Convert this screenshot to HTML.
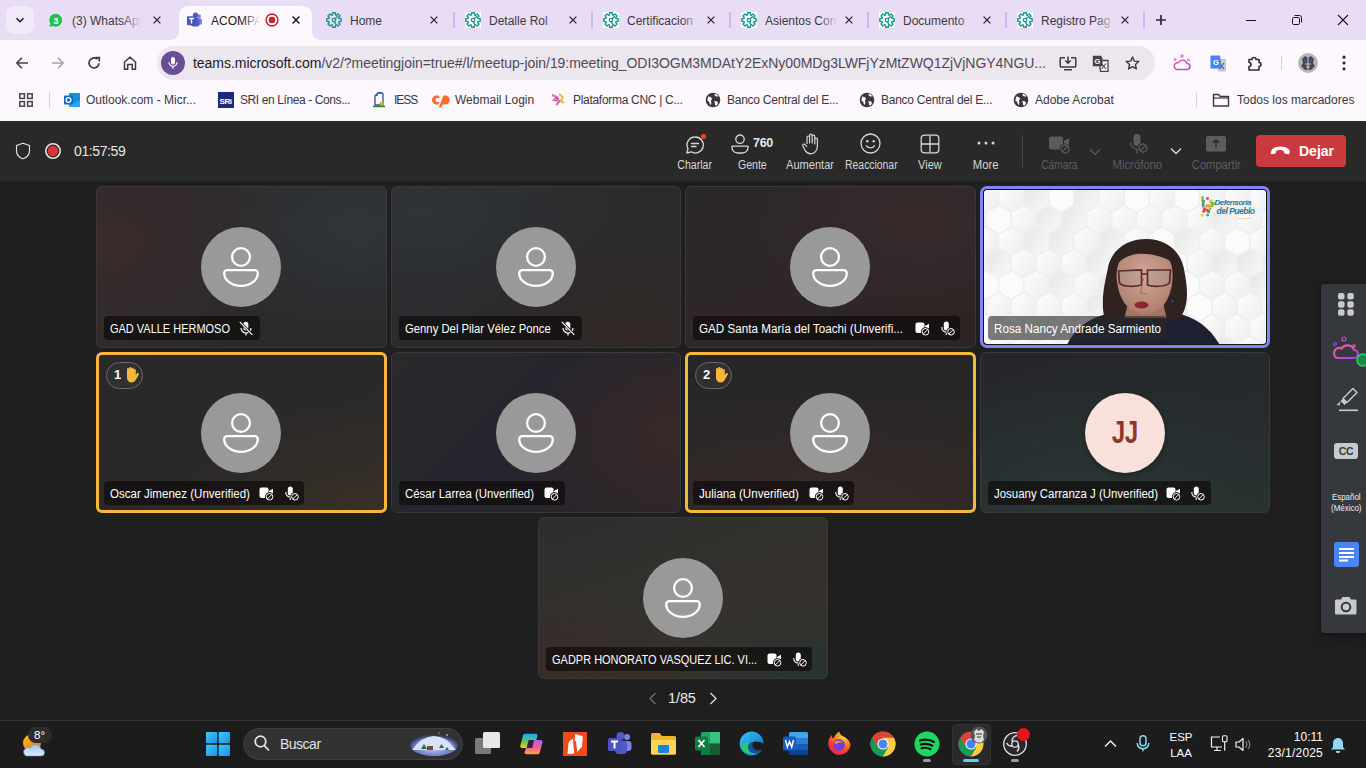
<!DOCTYPE html>
<html><head><meta charset="utf-8">
<style>
*{box-sizing:border-box;margin:0;padding:0}
html,body{width:1366px;height:768px;overflow:hidden;background:#1f1f1f;font-family:"Liberation Sans",sans-serif}
.a{position:absolute}
svg{display:block}
/* chrome */
#tabstrip{left:0;top:0;width:1366px;height:40px;background:#e8ddf4}
#toolbar{left:0;top:40px;width:1366px;height:81px;background:#fdf7fe}
.tabt{font-size:12px;color:#3c3940;white-space:nowrap;overflow:hidden;top:14px;line-height:14px}
.sep{width:1px;background:#c9b9e0}
#omni{left:157px;top:46px;width:998px;height:34px;border-radius:17px;background:#ece6ef}
.bm{font-size:12px;color:#3b3742;top:93px;line-height:14px;white-space:nowrap}
/* teams */
#thead{left:0;top:121px;width:1366px;height:60px;background:#292929}
.tb{color:#d6d6d6;font-size:12px;text-align:center;white-space:nowrap}
.tile{border-radius:6px;border:1px solid #3a3838;overflow:hidden}
.av{width:80px;height:80px;border-radius:50%;background:#999;box-shadow:0 2px 6px rgba(0,0,0,.35)}
.lbl{height:24px;border-radius:4px;background:rgba(10,8,8,.72);color:#fff;font-size:12.5px;line-height:26px;padding-left:6px;white-space:nowrap}
#taskbar{left:0;top:720px;width:1366px;height:48px;background:#1c1c1c;border-top:1px solid #333}
</style></head><body>
<div id="toolbar" class="a"></div>
<!-- TAB STRIP -->
<div id="tabstrip" class="a"></div>
<div class="a" style="left:6px;top:6px;width:28px;height:28px;border-radius:8px;background:#f2e9f9"></div>
<svg class="a" style="left:14px;top:14px" width="12" height="12" viewBox="0 0 12 12"><path d="M2.5 4.2 L6 7.7 L9.5 4.2" fill="none" stroke="#1f1b24" stroke-width="1.6"/></svg>
<!-- tab1 whatsapp -->
<svg class="a" style="left:47px;top:12px" width="17" height="17" viewBox="0 0 17 17"><path d="M8.8 1.2a7 7 0 0 0-6 10.6L1.6 15.6l3.9-1.1A7 7 0 1 0 8.8 1.2z" fill="#1fbf55" stroke="#fff" stroke-width=".7"/><text x="8.8" y="11.8" font-size="9.5" font-weight="bold" fill="#fff" text-anchor="middle" font-family="Liberation Sans">3</text></svg>
<div class="a tabt" style="left:72px;width:70px">(3) WhatsApp</div>
<div class="a" style="left:122px;top:10px;width:22px;height:20px;background:linear-gradient(90deg,rgba(232,221,244,0),#e8ddf4 90%)"></div>
<svg class="a x8" style="left:153px;top:16px" width="8" height="8" viewBox="0 0 8 8"><path d="M.6.6l6.8 6.8M7.4.6L.6 7.4" stroke="#2b2731" stroke-width="1.3"/></svg>
<!-- active tab -->
<div class="a" style="left:179px;top:6px;width:133px;height:36px;background:#fdf7fe;border-radius:9px 9px 0 0"></div>
<div class="a" style="left:171px;top:32px;width:8px;height:8px;background:radial-gradient(circle at 0 0,#e8ddf4 7.5px,#fdf7fe 8px)"></div>
<div class="a" style="left:312px;top:32px;width:8px;height:8px;background:radial-gradient(circle at 100% 0,#e8ddf4 7.5px,#fdf7fe 8px)"></div>
<svg class="a" style="left:186px;top:12px" width="17" height="16" viewBox="0 0 17 16"><circle cx="13" cy="4.3" r="2" fill="#7b83eb"/><circle cx="9.5" cy="3.2" r="2.6" fill="#5059c9"/><rect x="9" y="6.3" width="7" height="6.5" rx="2" fill="#7b83eb"/><rect x="5" y="6" width="8.5" height="8.5" rx="2.5" fill="#5059c9"/><rect x="1" y="4.3" width="9" height="9" rx="1" fill="#4b53bc"/><path d="M3 6.5h5M5.5 6.5v5" stroke="#fff" stroke-width="1.4"/></svg>
<div class="a tabt" style="left:211px;width:48px;color:#1e1b22">ACOMPA</div>
<div class="a" style="left:243px;top:10px;width:18px;height:20px;background:linear-gradient(90deg,rgba(253,247,254,0),#fdf7fe 95%)"></div>
<svg class="a" style="left:264px;top:12px" width="16" height="16" viewBox="0 0 16 16"><circle cx="8" cy="8" r="5.9" fill="none" stroke="#c8232b" stroke-width="1.5"/><circle cx="8" cy="8" r="3.3" fill="#c8232b"/></svg>
<svg class="a" style="left:292px;top:16px" width="8" height="8" viewBox="0 0 8 8"><path d="M.6.6l6.8 6.8M7.4.6L.6 7.4" stroke="#1b181f" stroke-width="1.4"/></svg>

<svg class="a" style="left:326px;top:12px" width="16" height="16" viewBox="0 0 16 16"><path d="M5.97 3.10 L6.45 2.93 L6.61 0.83 L9.39 0.83 L9.55 2.93 L10.03 3.10 L10.49 3.32 L12.08 1.95 L14.05 3.92 L12.68 5.51 L12.90 5.97 L13.07 6.45 L15.17 6.61 L15.17 9.39 L13.07 9.55 L12.90 10.03 L12.68 10.49 L14.05 12.08 L12.08 14.05 L10.49 12.68 L10.03 12.90 L9.55 13.07 L9.39 15.17 L6.61 15.17 L6.45 13.07 L5.97 12.90 L5.51 12.68 L3.92 14.05 L1.95 12.08 L3.32 10.49 L3.10 10.03 L2.93 9.55 L0.83 9.39 L0.83 6.61 L2.93 6.45 L3.10 5.97 L3.32 5.51 L1.95 3.92 L3.92 1.95 L5.51 3.32Z" fill="none" stroke="#169a8e" stroke-width="1.45" stroke-linejoin="round"/><circle cx="8" cy="8" r="1.7" fill="none" stroke="#169a8e" stroke-width="1.3"/><path d="M9.2 6.8L11.8 4.2M8.3 9.7l1.8 3" stroke="#169a8e" stroke-width="1.3"/></svg>
<div class="a tabt" style="left:350px;width:72px">Home</div>
<div class="a" style="left:404px;top:10px;width:22px;height:20px;background:linear-gradient(90deg,rgba(232,221,244,0),#e8ddf4 90%)"></div>
<svg class="a" style="left:430px;top:16px" width="8" height="8" viewBox="0 0 8 8"><path d="M.6.6l6.8 6.8M7.4.6L.6 7.4" stroke="#2b2731" stroke-width="1.3"/></svg>
<svg class="a" style="left:465px;top:12px" width="16" height="16" viewBox="0 0 16 16"><rect width="16" height="16" fill="#fff"/><path d="M5.97 3.10 L6.45 2.93 L6.61 0.83 L9.39 0.83 L9.55 2.93 L10.03 3.10 L10.49 3.32 L12.08 1.95 L14.05 3.92 L12.68 5.51 L12.90 5.97 L13.07 6.45 L15.17 6.61 L15.17 9.39 L13.07 9.55 L12.90 10.03 L12.68 10.49 L14.05 12.08 L12.08 14.05 L10.49 12.68 L10.03 12.90 L9.55 13.07 L9.39 15.17 L6.61 15.17 L6.45 13.07 L5.97 12.90 L5.51 12.68 L3.92 14.05 L1.95 12.08 L3.32 10.49 L3.10 10.03 L2.93 9.55 L0.83 9.39 L0.83 6.61 L2.93 6.45 L3.10 5.97 L3.32 5.51 L1.95 3.92 L3.92 1.95 L5.51 3.32Z" fill="none" stroke="#169a8e" stroke-width="1.45" stroke-linejoin="round"/><circle cx="8" cy="8" r="1.7" fill="none" stroke="#169a8e" stroke-width="1.3"/><path d="M9.2 6.8L11.8 4.2M8.3 9.7l1.8 3" stroke="#169a8e" stroke-width="1.3"/></svg>
<div class="a tabt" style="left:489px;width:72px">Detalle Rol</div>
<div class="a" style="left:543px;top:10px;width:22px;height:20px;background:linear-gradient(90deg,rgba(232,221,244,0),#e8ddf4 90%)"></div>
<svg class="a" style="left:569px;top:16px" width="8" height="8" viewBox="0 0 8 8"><path d="M.6.6l6.8 6.8M7.4.6L.6 7.4" stroke="#2b2731" stroke-width="1.3"/></svg>
<svg class="a" style="left:603px;top:12px" width="16" height="16" viewBox="0 0 16 16"><rect width="16" height="16" fill="#fff"/><path d="M5.97 3.10 L6.45 2.93 L6.61 0.83 L9.39 0.83 L9.55 2.93 L10.03 3.10 L10.49 3.32 L12.08 1.95 L14.05 3.92 L12.68 5.51 L12.90 5.97 L13.07 6.45 L15.17 6.61 L15.17 9.39 L13.07 9.55 L12.90 10.03 L12.68 10.49 L14.05 12.08 L12.08 14.05 L10.49 12.68 L10.03 12.90 L9.55 13.07 L9.39 15.17 L6.61 15.17 L6.45 13.07 L5.97 12.90 L5.51 12.68 L3.92 14.05 L1.95 12.08 L3.32 10.49 L3.10 10.03 L2.93 9.55 L0.83 9.39 L0.83 6.61 L2.93 6.45 L3.10 5.97 L3.32 5.51 L1.95 3.92 L3.92 1.95 L5.51 3.32Z" fill="none" stroke="#169a8e" stroke-width="1.45" stroke-linejoin="round"/><circle cx="8" cy="8" r="1.7" fill="none" stroke="#169a8e" stroke-width="1.3"/><path d="M9.2 6.8L11.8 4.2M8.3 9.7l1.8 3" stroke="#169a8e" stroke-width="1.3"/></svg>
<div class="a tabt" style="left:627px;width:72px">Certificacion</div>
<div class="a" style="left:681px;top:10px;width:22px;height:20px;background:linear-gradient(90deg,rgba(232,221,244,0),#e8ddf4 90%)"></div>
<svg class="a" style="left:707px;top:16px" width="8" height="8" viewBox="0 0 8 8"><path d="M.6.6l6.8 6.8M7.4.6L.6 7.4" stroke="#2b2731" stroke-width="1.3"/></svg>
<svg class="a" style="left:741px;top:12px" width="16" height="16" viewBox="0 0 16 16"><rect width="16" height="16" fill="#fff"/><path d="M5.97 3.10 L6.45 2.93 L6.61 0.83 L9.39 0.83 L9.55 2.93 L10.03 3.10 L10.49 3.32 L12.08 1.95 L14.05 3.92 L12.68 5.51 L12.90 5.97 L13.07 6.45 L15.17 6.61 L15.17 9.39 L13.07 9.55 L12.90 10.03 L12.68 10.49 L14.05 12.08 L12.08 14.05 L10.49 12.68 L10.03 12.90 L9.55 13.07 L9.39 15.17 L6.61 15.17 L6.45 13.07 L5.97 12.90 L5.51 12.68 L3.92 14.05 L1.95 12.08 L3.32 10.49 L3.10 10.03 L2.93 9.55 L0.83 9.39 L0.83 6.61 L2.93 6.45 L3.10 5.97 L3.32 5.51 L1.95 3.92 L3.92 1.95 L5.51 3.32Z" fill="none" stroke="#169a8e" stroke-width="1.45" stroke-linejoin="round"/><circle cx="8" cy="8" r="1.7" fill="none" stroke="#169a8e" stroke-width="1.3"/><path d="M9.2 6.8L11.8 4.2M8.3 9.7l1.8 3" stroke="#169a8e" stroke-width="1.3"/></svg>
<div class="a tabt" style="left:765px;width:72px">Asientos Con</div>
<div class="a" style="left:819px;top:10px;width:22px;height:20px;background:linear-gradient(90deg,rgba(232,221,244,0),#e8ddf4 90%)"></div>
<svg class="a" style="left:845px;top:16px" width="8" height="8" viewBox="0 0 8 8"><path d="M.6.6l6.8 6.8M7.4.6L.6 7.4" stroke="#2b2731" stroke-width="1.3"/></svg>
<svg class="a" style="left:879px;top:12px" width="16" height="16" viewBox="0 0 16 16"><rect width="16" height="16" fill="#fff"/><path d="M5.97 3.10 L6.45 2.93 L6.61 0.83 L9.39 0.83 L9.55 2.93 L10.03 3.10 L10.49 3.32 L12.08 1.95 L14.05 3.92 L12.68 5.51 L12.90 5.97 L13.07 6.45 L15.17 6.61 L15.17 9.39 L13.07 9.55 L12.90 10.03 L12.68 10.49 L14.05 12.08 L12.08 14.05 L10.49 12.68 L10.03 12.90 L9.55 13.07 L9.39 15.17 L6.61 15.17 L6.45 13.07 L5.97 12.90 L5.51 12.68 L3.92 14.05 L1.95 12.08 L3.32 10.49 L3.10 10.03 L2.93 9.55 L0.83 9.39 L0.83 6.61 L2.93 6.45 L3.10 5.97 L3.32 5.51 L1.95 3.92 L3.92 1.95 L5.51 3.32Z" fill="none" stroke="#169a8e" stroke-width="1.45" stroke-linejoin="round"/><circle cx="8" cy="8" r="1.7" fill="none" stroke="#169a8e" stroke-width="1.3"/><path d="M9.2 6.8L11.8 4.2M8.3 9.7l1.8 3" stroke="#169a8e" stroke-width="1.3"/></svg>
<div class="a tabt" style="left:903px;width:72px">Documento</div>
<div class="a" style="left:957px;top:10px;width:22px;height:20px;background:linear-gradient(90deg,rgba(232,221,244,0),#e8ddf4 90%)"></div>
<svg class="a" style="left:983px;top:16px" width="8" height="8" viewBox="0 0 8 8"><path d="M.6.6l6.8 6.8M7.4.6L.6 7.4" stroke="#2b2731" stroke-width="1.3"/></svg>
<svg class="a" style="left:1017px;top:12px" width="16" height="16" viewBox="0 0 16 16"><rect width="16" height="16" fill="#fff"/><path d="M5.97 3.10 L6.45 2.93 L6.61 0.83 L9.39 0.83 L9.55 2.93 L10.03 3.10 L10.49 3.32 L12.08 1.95 L14.05 3.92 L12.68 5.51 L12.90 5.97 L13.07 6.45 L15.17 6.61 L15.17 9.39 L13.07 9.55 L12.90 10.03 L12.68 10.49 L14.05 12.08 L12.08 14.05 L10.49 12.68 L10.03 12.90 L9.55 13.07 L9.39 15.17 L6.61 15.17 L6.45 13.07 L5.97 12.90 L5.51 12.68 L3.92 14.05 L1.95 12.08 L3.32 10.49 L3.10 10.03 L2.93 9.55 L0.83 9.39 L0.83 6.61 L2.93 6.45 L3.10 5.97 L3.32 5.51 L1.95 3.92 L3.92 1.95 L5.51 3.32Z" fill="none" stroke="#169a8e" stroke-width="1.45" stroke-linejoin="round"/><circle cx="8" cy="8" r="1.7" fill="none" stroke="#169a8e" stroke-width="1.3"/><path d="M9.2 6.8L11.8 4.2M8.3 9.7l1.8 3" stroke="#169a8e" stroke-width="1.3"/></svg>
<div class="a tabt" style="left:1041px;width:72px">Registro Pag</div>
<div class="a" style="left:1095px;top:10px;width:22px;height:20px;background:linear-gradient(90deg,rgba(232,221,244,0),#e8ddf4 90%)"></div>
<svg class="a" style="left:1121px;top:16px" width="8" height="8" viewBox="0 0 8 8"><path d="M.6.6l6.8 6.8M7.4.6L.6 7.4" stroke="#2b2731" stroke-width="1.3"/></svg>
<div class="a" style="left:453px;top:12px;width:2px;height:16px;background:#cbb9ef"></div>
<div class="a" style="left:591px;top:12px;width:2px;height:16px;background:#cbb9ef"></div>
<div class="a" style="left:729px;top:12px;width:2px;height:16px;background:#cbb9ef"></div>
<div class="a" style="left:867px;top:12px;width:2px;height:16px;background:#cbb9ef"></div>
<div class="a" style="left:1005px;top:12px;width:2px;height:16px;background:#cbb9ef"></div>
<div class="a" style="left:1143px;top:12px;width:2px;height:16px;background:#cbb9ef"></div>
<svg class="a" style="left:1155px;top:14px" width="12" height="12" viewBox="0 0 12 12"><path d="M6 1v10M1 6h10" stroke="#2b2731" stroke-width="1.7"/></svg>
<div class="a" style="left:1246px;top:20px;width:10px;height:1px;background:#1b181f"></div>
<svg class="a" style="left:1291px;top:14px" width="12" height="12" viewBox="0 0 12 12"><rect x="1.5" y="3.5" width="7" height="7" rx="1.2" fill="none" stroke="#1b181f" stroke-width="1"/><path d="M3.5 1.5h5a2 2 0 0 1 2 2v5" fill="none" stroke="#1b181f" stroke-width="1"/></svg>
<svg class="a" style="left:1337px;top:14px" width="12" height="12" viewBox="0 0 12 12"><path d="M1 1l10 10M11 1L1 11" stroke="#1b181f" stroke-width="1.1"/></svg>
<!-- TOOLBAR -->
<svg class="a" style="left:15px;top:56px" width="14" height="14" viewBox="0 0 14 14"><path d="M13 7H2M7 1.8L1.8 7 7 12.2" fill="none" stroke="#44404a" stroke-width="1.6"/></svg>
<svg class="a" style="left:51px;top:56px" width="14" height="14" viewBox="0 0 14 14"><path d="M1 7h11M7 1.8L12.2 7 7 12.2" fill="none" stroke="#a9a4ae" stroke-width="1.6"/></svg>
<svg class="a" style="left:87px;top:56px" width="14" height="14" viewBox="0 0 14 14"><path d="M12 7.2A5 5 0 1 1 10.3 3.2" fill="none" stroke="#3d3943" stroke-width="1.7"/><path d="M8.3 1.6h4v4" fill="none" stroke="#3d3943" stroke-width="1.7"/></svg>
<svg class="a" style="left:123px;top:56px" width="14" height="14" viewBox="0 0 14 14"><path d="M1.5 13.3V6L7 1.3 12.5 6v7.3H9.3V8.6H4.7v4.7z" fill="none" stroke="#3d3943" stroke-width="1.5" stroke-linejoin="miter"/></svg>
<div id="omni" class="a"></div>
<div class="a" style="left:161px;top:51px;width:24px;height:24px;border-radius:50%;background:#6a4d98"></div>
<svg class="a" style="left:167px;top:56px" width="12" height="14" viewBox="0 0 12 14"><rect x="4" y="1" width="4" height="7.5" rx="2" fill="#fff"/><path d="M2 6.3a4 4 0 0 0 8 0M6 10.3v2.5" fill="none" stroke="#fff" stroke-width="1.2"/></svg>
<div class="a" style="left:193px;top:55px;font-size:14px;line-height:16px;color:#1d1a21;white-space:nowrap;letter-spacing:-0.04px">teams.microsoft.com<span style="color:#4f4a55">/v2/?meetingjoin=true#/l/meetup-join/19:meeting_ODI3OGM3MDAtY2ExNy00MDg3LWFjYzMtZWQ1ZjVjNGY4NGU...</span></div>
<svg class="a" style="left:1059px;top:56px" width="18" height="15" viewBox="0 0 18 15"><path d="M6 1.8H2.2a1 1 0 0 0-1 1v7.2a1 1 0 0 0 1 1h13.6a1 1 0 0 0 1-1V2.8a1 1 0 0 0-1-1H12" fill="none" stroke="#3d3943" stroke-width="1.5"/><path d="M9 0.5v6.5M6.3 4.5L9 7.2l2.7-2.7M5 13.8h8" fill="none" stroke="#3d3943" stroke-width="1.5"/></svg>
<svg class="a" style="left:1092px;top:55px" width="17" height="17" viewBox="0 0 17 17"><path d="M7 5.5h9v11H8.5z" fill="#fdf7fe" stroke="#45414b" stroke-width="1.3"/><path d="M9.5 8.5l4.5 5.5M14 8.5l-4.5 5.5" stroke="#45414b" stroke-width="1.1"/><path d="M0.8 0.8h8.4l1.3 3v7.5H0.8z" fill="#45414b"/><text x="5.3" y="8.8" font-size="7.5" font-weight="bold" fill="#fdf7fe" text-anchor="middle" font-family="Liberation Sans">G</text></svg>
<svg class="a" style="left:1125px;top:56px" width="15" height="14" viewBox="0 0 15 14"><path d="M7.5 1l1.8 4.1 4.5.4-3.4 3 1 4.4-3.9-2.3-3.9 2.3 1-4.4-3.4-3 4.5-.4z" fill="none" stroke="#3d3943" stroke-width="1.4" stroke-linejoin="round"/></svg>
<svg class="a" style="left:1173px;top:54px" width="18" height="17" viewBox="0 0 18 17"><defs><linearGradient id="cg" x1="0" y1="0" x2="1" y2="1"><stop offset="0" stop-color="#f25aa5"/><stop offset="1" stop-color="#a050e0"/></linearGradient></defs><path d="M4 15.5h10a3 3 0 0 0 0-6 4.6 4.6 0 0 0-8.5-.8A3.4 3.4 0 0 0 4 15.5z" fill="none" stroke="url(#cg)" stroke-width="1.6"/><circle cx="9" cy="2" r="1.3" fill="none" stroke="#e860b0" stroke-width="1"/><circle cx="2" cy="5.5" r="1" fill="none" stroke="#e860b0" stroke-width="1"/><circle cx="15.5" cy="6" r="1" fill="none" stroke="#e860b0" stroke-width="1"/></svg>
<svg class="a" style="left:1210px;top:55px" width="17" height="17" viewBox="0 0 17 17"><path d="M6 4h10v12.5H8z" fill="#c9c6cc"/><path d="M9.5 8l4.5 6M14 8l-4.5 6" stroke="#4a4650" stroke-width="1"/><path d="M0.5 0.5h9.5l2 13H0.5z" fill="#4285f4"/><text x="5.8" y="10" font-size="7.5" font-weight="bold" fill="#fff" text-anchor="middle" font-family="Liberation Sans">G</text></svg>
<svg class="a" style="left:1247px;top:55px" width="17" height="17" viewBox="0 0 17 17"><path d="M2 4.5h3a2 2 0 0 1 4 0h3v3a2 2 0 0 1 0 4v3.5H2v-3.5a2 2 0 0 0 0-4z" fill="none" stroke="#2f2b35" stroke-width="1.6" stroke-linejoin="round"/></svg>
<div class="a" style="left:1281px;top:56px;width:1px;height:14px;background:#d6c9ea"></div>
<svg class="a" style="left:1298px;top:53px" width="20" height="20" viewBox="0 0 20 20"><circle cx="10" cy="10" r="10" fill="#b8b6bb"/><path d="M4 6l3-3 3 2 3-2 3 3-1 4 2 3-4 4h-6l-4-4 2-3z" fill="#4a484e"/><path d="M6 7l2 2M14 7l-2 2" stroke="#2a5fb0" stroke-width="1.5"/><path d="M7 11h6M8 14h4M10 5v12" stroke="#d8d8dc" stroke-width=".9"/></svg>
<svg class="a" style="left:1341px;top:55px" width="6" height="16" viewBox="0 0 6 16"><circle cx="3" cy="2.2" r="1.6" fill="#2f2b35"/><circle cx="3" cy="8" r="1.6" fill="#2f2b35"/><circle cx="3" cy="13.8" r="1.6" fill="#2f2b35"/></svg>
<!-- BOOKMARKS -->
<svg class="a" style="left:19px;top:93px" width="14" height="14" viewBox="0 0 14 14"><g fill="none" stroke="#47434d" stroke-width="1.5"><rect x=".8" y=".8" width="4.6" height="4.6"/><rect x="8.6" y=".8" width="4.6" height="4.6"/><rect x=".8" y="8.6" width="4.6" height="4.6"/><rect x="8.6" y="8.6" width="4.6" height="4.6"/></g></svg>
<div class="a" style="left:49px;top:92px;width:1px;height:16px;background:#dccdf0"></div>
<svg class="a" style="left:64px;top:92px" width="16" height="16" viewBox="0 0 16 16"><rect x="5" y="1" width="11" height="14" rx="1" fill="#1490df"/><path d="M5 8l5.5 3.5L16 8v7H5z" fill="#28a8ea"/><rect x="0" y="3.5" width="9" height="9" rx="1" fill="#0f6cbd"/><circle cx="4.5" cy="8" r="2.4" fill="none" stroke="#fff" stroke-width="1.3"/></svg>
<div class="a bm" style="left:86px">Outlook.com - Micr...</div>
<svg class="a" style="left:218px;top:92px" width="16" height="16" viewBox="0 0 16 16"><rect width="16" height="16" fill="#1e2a78"/><text x="7.5" y="11.5" font-size="8" font-weight="bold" fill="#fff" text-anchor="middle" font-family="Liberation Sans" letter-spacing="-.5">SRi</text></svg>
<div class="a bm" style="left:240px;letter-spacing:-0.4px">SRI en Línea - Cons...</div>
<svg class="a" style="left:372px;top:91px" width="14" height="17" viewBox="0 0 14 17"><path d="M3 14V5a1 1 0 0 1 2 0V3a1 1 0 0 1 2 0v-.5a1 1 0 0 1 2 0V3a1 1 0 0 1 2 0v11z" fill="none" stroke="#2a4fa0" stroke-width="1.3"/><path d="M1 15.5h12" stroke="#2e8b3a" stroke-width="1.5"/><circle cx="9.5" cy="12.5" r="2" fill="#e8b020"/></svg>
<div class="a bm" style="left:394px;letter-spacing:-1px">IESS</div>
<svg class="a" style="left:432px;top:92px" width="18" height="16" viewBox="0 0 18 16"><path d="M6.5 3.5H4.5a4.5 4.5 0 0 0 0 9h2l1-2.6H5a2 2 0 0 1 0-3.9h3z" fill="#ff6c2c"/><path d="M9 3.5h4.3a4.5 4.5 0 0 1 0 9h-2.6l-1.4 3H6.8L11.5 3.5z" fill="#ff6c2c"/></svg>
<div class="a bm" style="left:455px">Webmail Login</div>
<svg class="a" style="left:550px;top:92px" width="16" height="16" viewBox="0 0 16 16"><path d="M2 3l5 2-3 3 6 1-4 4" fill="none" stroke="#e26aa4" stroke-width="2"/><path d="M9 2l4 3-2 4 3 2" fill="none" stroke="#f2b233" stroke-width="1.8"/><path d="M6 6l3 1" stroke="#7a5ac8" stroke-width="1.5"/></svg>
<div class="a bm" style="left:573px;letter-spacing:-0.3px">Plataforma CNC | C...</div>
<svg class="a globe" style="left:705px;top:92px" width="16" height="16" viewBox="0 0 16 16"><circle cx="8" cy="8" r="7.3" fill="#3b3740"/><path d="M3.2 4.5l2.5.5 1.5 2-1.3 1.5.6 2.5-1.3 2.3L4 9.5 2.3 8.8M10 1.6l-.5 1.7 1.6 1.2 2.8-.3M9.3 9l2.4.2 1.4 1.6-1.3 2.8-1.8-.6-.2-2.2z" fill="#fdf7fe"/></svg>
<div class="a bm" style="left:727px;letter-spacing:-0.25px">Banco Central del E...</div>
<svg class="a globe" style="left:859px;top:92px" width="16" height="16" viewBox="0 0 16 16"><circle cx="8" cy="8" r="7.3" fill="#3b3740"/><path d="M3.2 4.5l2.5.5 1.5 2-1.3 1.5.6 2.5-1.3 2.3L4 9.5 2.3 8.8M10 1.6l-.5 1.7 1.6 1.2 2.8-.3M9.3 9l2.4.2 1.4 1.6-1.3 2.8-1.8-.6-.2-2.2z" fill="#fdf7fe"/></svg>
<div class="a bm" style="left:881px;letter-spacing:-0.25px">Banco Central del E...</div>
<svg class="a globe" style="left:1013px;top:92px" width="16" height="16" viewBox="0 0 16 16"><circle cx="8" cy="8" r="7.3" fill="#3b3740"/><path d="M3.2 4.5l2.5.5 1.5 2-1.3 1.5.6 2.5-1.3 2.3L4 9.5 2.3 8.8M10 1.6l-.5 1.7 1.6 1.2 2.8-.3M9.3 9l2.4.2 1.4 1.6-1.3 2.8-1.8-.6-.2-2.2z" fill="#fdf7fe"/></svg>
<div class="a bm" style="left:1035px">Adobe Acrobat</div>
<div class="a" style="left:1196px;top:92px;width:1px;height:16px;background:#dccdf0"></div>
<svg class="a" style="left:1212px;top:92px" width="18" height="16" viewBox="0 0 18 16"><path d="M1.5 2.5h5l1.8 2h8.2v9.5h-15z" fill="none" stroke="#3b3740" stroke-width="1.4" stroke-linejoin="round"/><path d="M1.5 6h15" stroke="#3b3740" stroke-width="1.2"/></svg>
<div class="a bm" style="left:1237px">Todos los marcadores</div>

<div id="thead" class="a"></div>
<svg class="a" style="left:15px;top:142px" width="16" height="18" viewBox="0 0 16 18"><path d="M8 1.2L1.5 3.5v5.2c0 4 2.8 6.8 6.5 8 3.7-1.2 6.5-4 6.5-8V3.5z" fill="none" stroke="#e8e8e8" stroke-width="1.1" stroke-linejoin="round"/></svg>
<svg class="a" style="left:44px;top:142px" width="18" height="18" viewBox="0 0 18 18"><circle cx="9" cy="9" r="7.2" fill="none" stroke="#e4e4e4" stroke-width="1.6"/><circle cx="9" cy="9" r="5.3" fill="#d9343b"/></svg>
<div class="a" style="left:74px;top:143px;font-size:14px;line-height:16px;color:#e6e6e6;white-space:nowrap;letter-spacing:-0.4px">01:57:59</div>
<svg class="a" style="left:684px;top:134px" width="22" height="21" viewBox="0 0 22 21"><path d="M11 3a8 8 0 0 0-7 11.8L2.8 19l4.3-1.2A8 8 0 1 0 11 3z" fill="none" stroke="#d6d6d6" stroke-width="1.3" stroke-linejoin="round"/><path d="M7.5 9.5h7M7.5 12.5h4.5" stroke="#d6d6d6" stroke-width="1.3" stroke-linecap="round"/><circle cx="19.5" cy="2.5" r="2.6" fill="#e8412c"/></svg>
<div class="a tb" style="left:655px;top:158px;width:80px;line-height:14px;color:#d6d6d6"><span style="display:inline-block;font-size:12px;transform:scaleX(0.88)">Charlar</span></div>
<svg class="a" style="left:731px;top:134px" width="20" height="20" viewBox="0 0 20 20"><circle cx="9" cy="5.2" r="4.2" fill="none" stroke="#d6d6d6" stroke-width="1.3"/><path d="M1 12.2h16v1.3a5.5 5.5 0 0 1-5.5 5.5h-5A5.5 5.5 0 0 1 1 13.5z" fill="none" stroke="#d6d6d6" stroke-width="1.3" stroke-linejoin="round"/></svg>
<div class="a" style="left:753px;top:136px;font-size:12.5px;font-weight:bold;color:#e6e6e6;line-height:14px;letter-spacing:-0.3px">760</div>
<div class="a tb" style="left:712px;top:158px;width:80px;line-height:14px;color:#d6d6d6"><span style="display:inline-block;font-size:12px;transform:scaleX(0.88)">Gente</span></div>
<svg class="a" style="left:801px;top:133px" width="20" height="22" viewBox="0 0 20 22"><path d="M6 11V4.3a1.3 1.3 0 0 1 2.6 0V10V2.5a1.3 1.3 0 0 1 2.6 0V10V3.5a1.3 1.3 0 0 1 2.6 0V11V6.5a1.3 1.3 0 0 1 2.6 0v6.5c0 4.5-2.8 7.8-6.8 7.8-2.6 0-4-1.3-5.5-3.5L1.8 13a1.4 1.4 0 0 1 2.3-1.5L6 14" fill="none" stroke="#d6d6d6" stroke-width="1.2" stroke-linejoin="round"/></svg>
<div class="a tb" style="left:770px;top:158px;width:80px;line-height:14px;color:#d6d6d6"><span style="display:inline-block;font-size:12px;transform:scaleX(0.92)">Aumentar</span></div>
<svg class="a" style="left:860px;top:133px" width="21" height="21" viewBox="0 0 21 21"><circle cx="10.5" cy="10.5" r="9.5" fill="none" stroke="#d6d6d6" stroke-width="1.3"/><circle cx="7.3" cy="8.3" r="1.2" fill="#d6d6d6"/><circle cx="13.7" cy="8.3" r="1.2" fill="#d6d6d6"/><path d="M6.5 12.8a5 5 0 0 0 8 0" fill="none" stroke="#d6d6d6" stroke-width="1.3" stroke-linecap="round"/></svg>
<div class="a tb" style="left:831px;top:158px;width:80px;line-height:14px;color:#d6d6d6"><span style="display:inline-block;font-size:12px;transform:scaleX(0.865)">Reaccionar</span></div>
<svg class="a" style="left:920px;top:134px" width="20" height="20" viewBox="0 0 20 20"><rect x="1.2" y="1.2" width="17.6" height="17.6" rx="3" fill="none" stroke="#d6d6d6" stroke-width="1.3"/><path d="M10 1.2v17.6M1.2 10h17.6" stroke="#d6d6d6" stroke-width="1.3"/></svg>
<div class="a tb" style="left:890px;top:158px;width:80px;line-height:14px;color:#d6d6d6"><span style="display:inline-block;font-size:12px;transform:scaleX(0.92)">View</span></div>
<svg class="a" style="left:977px;top:141px" width="18" height="4" viewBox="0 0 18 4"><circle cx="2" cy="2" r="1.5" fill="#d6d6d6"/><circle cx="9" cy="2" r="1.5" fill="#d6d6d6"/><circle cx="16" cy="2" r="1.5" fill="#d6d6d6"/></svg>
<div class="a tb" style="left:946px;top:158px;width:80px;line-height:14px;color:#d6d6d6"><span style="display:inline-block;font-size:12px;transform:scaleX(0.94)">More</span></div>
<div class="a" style="left:1022px;top:135px;width:1px;height:32px;background:#4a4a4a"></div>
<svg class="a" style="left:1048px;top:135px" width="24" height="20" viewBox="0 0 24 20"><rect x="1" y="1.5" width="14" height="13" rx="2.5" fill="#5c5c5c"/><path d="M16 6l5-3v9l-5-3z" fill="#5c5c5c"/><circle cx="17" cy="14" r="5.5" fill="#292929"/><circle cx="17" cy="14" r="4" fill="none" stroke="#5c5c5c" stroke-width="1.3"/><path d="M14.3 16.7l5.4-5.4" stroke="#5c5c5c" stroke-width="1.3"/></svg>
<div class="a tb" style="left:1019px;top:158px;width:80px;line-height:14px;color:#5c5c5c"><span style="display:inline-block;font-size:12px;transform:scaleX(0.85)">Cámara</span></div>
<svg class="a" style="left:1089px;top:148px" width="12" height="8" viewBox="0 0 12 8"><path d="M1 1.5l5 5 5-5" fill="none" stroke="#5c5c5c" stroke-width="1.2"/></svg>
<svg class="a" style="left:1128px;top:133px" width="22" height="22" viewBox="0 0 22 22"><rect x="5.5" y="1" width="7" height="12" rx="3.5" fill="#5c5c5c"/><path d="M2.5 9.5a6.5 6.5 0 0 0 6.5 6.5v4.5" fill="none" stroke="#5c5c5c" stroke-width="1.3"/><circle cx="15" cy="15" r="5.5" fill="#292929"/><circle cx="15" cy="15" r="4" fill="none" stroke="#5c5c5c" stroke-width="1.3"/><path d="M12.3 17.7l5.4-5.4" stroke="#5c5c5c" stroke-width="1.3"/></svg>
<div class="a tb" style="left:1097px;top:158px;width:80px;line-height:14px;color:#5c5c5c"><span style="display:inline-block;font-size:12px;transform:scaleX(0.94)">Micrófono</span></div>
<svg class="a" style="left:1170px;top:147px" width="12" height="8" viewBox="0 0 12 8"><path d="M1 1.5l5 5 5-5" fill="none" stroke="#dadada" stroke-width="1.3"/></svg>
<svg class="a" style="left:1205px;top:135px" width="22" height="18" viewBox="0 0 22 18"><rect x="1" y="1" width="20" height="15.5" rx="2" fill="#5c5c5c"/><path d="M11 13V5M7.8 8L11 4.8 14.2 8" fill="none" stroke="#292929" stroke-width="1.3"/></svg>
<div class="a tb" style="left:1176px;top:158px;width:80px;line-height:14px;color:#5c5c5c"><span style="display:inline-block;font-size:12px;transform:scaleX(0.93)">Compartir</span></div>
<div class="a" style="left:1256px;top:135px;width:90px;height:32px;border-radius:4px;background:#c93a3f"></div>
<svg class="a" style="left:1270px;top:145px" width="21" height="10" viewBox="0 0 21 10"><path d="M1.2 6.8C1 4.5 4.5 1.5 10.5 1.5S20 4.5 19.8 6.8l-.3 1.5c-.1.7-.8 1.1-1.5.9l-3.2-.8c-.6-.2-1-.7-1-1.3V5.8c-1-.5-2.4-.7-3.8-.7s-2.8.2-3.8.7v1.3c0 .6-.4 1.1-1 1.3l-3.2.8c-.7.2-1.4-.2-1.5-.9z" fill="#fff"/></svg>
<div class="a" style="left:1299px;top:143px;font-size:14px;font-weight:bold;color:#fff;line-height:16px">Dejar</div>
<div class="a tile" style="left:96px;top:186px;width:290.5px;height:162px;background:radial-gradient(70% 90% at 0% 35%,#3a2b2b 0%,rgba(58,43,43,0) 100%),radial-gradient(60% 70% at 90% 25%,#2f3539 0%,rgba(47,53,57,0) 100%),linear-gradient(180deg,#2c2b2c 0%,#2a2a2b 100%);"></div>
<svg class="a" style="left:201.25px;top:227.0px" width="80" height="80" viewBox="0 0 80 80"><circle cx="40" cy="40" r="40" fill="#999"/><circle cx="40" cy="30" r="8.9" fill="none" stroke="#fff" stroke-width="2.3"/><path d="M26.2 43.2h27.6a3 3 0 0 1 3 3 16.8 12.6 0 0 1-33.6 0 3 3 0 0 1 3-3z" fill="none" stroke="#fff" stroke-width="2.3" stroke-linejoin="round"/></svg>
<div class="a lbl" style="left:104px;top:316px;width:156px;background:rgba(14,10,10,.68)"><span style="display:inline-block;transform:scaleX(0.878);transform-origin:0 50%">GAD VALLE HERMOSO</span></div>
<svg class="a" style="left:239px;top:321px" width="14" height="15" viewBox="0 0 14 15"><rect x="4.3" y="0.8" width="5" height="8.6" rx="2.5" fill="#fff"/><path d="M2 7a5 5 0 0 0 10 0M7 12v2.5" fill="none" stroke="#fff" stroke-width="1.2"/><path d="M0.8 0.8l12.5 13" stroke="#151010" stroke-width="2.6"/><path d="M0.8 0.8l12.5 13" stroke="#fff" stroke-width="1.2"/></svg>
<div class="a tile" style="left:390.5px;top:186px;width:290.5px;height:162px;background:radial-gradient(70% 80% at 85% 100%,#312825 0%,rgba(49,40,37,0) 100%),radial-gradient(80% 90% at 10% 15%,#2f3438 0%,rgba(47,52,56,0) 100%),linear-gradient(180deg,#2a2a2a 0%,#29292a 100%);"></div>
<svg class="a" style="left:495.75px;top:227.0px" width="80" height="80" viewBox="0 0 80 80"><circle cx="40" cy="40" r="40" fill="#999"/><circle cx="40" cy="30" r="8.9" fill="none" stroke="#fff" stroke-width="2.3"/><path d="M26.2 43.2h27.6a3 3 0 0 1 3 3 16.8 12.6 0 0 1-33.6 0 3 3 0 0 1 3-3z" fill="none" stroke="#fff" stroke-width="2.3" stroke-linejoin="round"/></svg>
<div class="a lbl" style="left:398.5px;top:316px;width:183px;background:rgba(14,10,10,.68)"><span style="display:inline-block;transform:scaleX(0.904);transform-origin:0 50%">Genny Del Pilar Vélez Ponce</span></div>
<svg class="a" style="left:560.5px;top:321px" width="14" height="15" viewBox="0 0 14 15"><rect x="4.3" y="0.8" width="5" height="8.6" rx="2.5" fill="#fff"/><path d="M2 7a5 5 0 0 0 10 0M7 12v2.5" fill="none" stroke="#fff" stroke-width="1.2"/><path d="M0.8 0.8l12.5 13" stroke="#151010" stroke-width="2.6"/><path d="M0.8 0.8l12.5 13" stroke="#fff" stroke-width="1.2"/></svg>
<div class="a tile" style="left:685px;top:186px;width:290.5px;height:162px;background:radial-gradient(90% 90% at 80% 20%,#372a2b 0%,rgba(55,42,43,0) 70%),linear-gradient(160deg,#2a2828 0%,#2f2627 60%,#2c2422 100%);"></div>
<svg class="a" style="left:790.25px;top:227.0px" width="80" height="80" viewBox="0 0 80 80"><circle cx="40" cy="40" r="40" fill="#999"/><circle cx="40" cy="30" r="8.9" fill="none" stroke="#fff" stroke-width="2.3"/><path d="M26.2 43.2h27.6a3 3 0 0 1 3 3 16.8 12.6 0 0 1-33.6 0 3 3 0 0 1 3-3z" fill="none" stroke="#fff" stroke-width="2.3" stroke-linejoin="round"/></svg>
<div class="a lbl" style="left:693px;top:316px;width:267px;background:rgba(14,10,10,.68)"><span style="display:inline-block;transform:scaleX(0.933);transform-origin:0 50%">GAD Santa María del Toachi (Unverifi...</span></div>
<svg class="a" style="left:915px;top:321px" width="15" height="15" viewBox="0 0 15 15"><rect x="0.5" y="1.5" width="9" height="10.5" rx="2" fill="#fff"/><path d="M10 5l4-2.3v5l-4-1.5z" fill="#fff"/><circle cx="10.5" cy="10.8" r="4.6" fill="#151010"/><circle cx="10.5" cy="10.8" r="3.3" fill="none" stroke="#fff" stroke-width="1"/><path d="M8.3 13l4.4-4.4" stroke="#fff" stroke-width="1"/></svg>
<svg class="a" style="left:940.5px;top:321px" width="15" height="15" viewBox="0 0 15 15"><rect x="2.8" y="0.5" width="5" height="9" rx="2.5" fill="#fff"/><path d="M0.8 6a4.5 4.5 0 0 0 4.5 5v3" fill="none" stroke="#fff" stroke-width="1.1"/><circle cx="10" cy="10.8" r="4.6" fill="#151010"/><circle cx="10" cy="10.8" r="3.3" fill="none" stroke="#fff" stroke-width="1"/><path d="M7.8 13l4.4-4.4" stroke="#fff" stroke-width="1"/></svg>
<div class="a tile" style="left:96px;top:352px;width:290.5px;height:161px;background:radial-gradient(110% 100% at 100% 100%,#3a3027 0%,rgba(58,48,39,0) 70%),linear-gradient(135deg,#282828 0%,#2b2a29 100%);border:3px solid #f4b93c;"></div>
<svg class="a" style="left:201.25px;top:392.5px" width="80" height="80" viewBox="0 0 80 80"><circle cx="40" cy="40" r="40" fill="#999"/><circle cx="40" cy="30" r="8.9" fill="none" stroke="#fff" stroke-width="2.3"/><path d="M26.2 43.2h27.6a3 3 0 0 1 3 3 16.8 12.6 0 0 1-33.6 0 3 3 0 0 1 3-3z" fill="none" stroke="#fff" stroke-width="2.3" stroke-linejoin="round"/></svg>
<div class="a lbl" style="left:104px;top:481px;width:200px;background:rgba(14,10,10,.68)"><span style="display:inline-block;transform:scaleX(0.924);transform-origin:0 50%">Oscar Jimenez (Unverified)</span></div>
<svg class="a" style="left:259px;top:486px" width="15" height="15" viewBox="0 0 15 15"><rect x="0.5" y="1.5" width="9" height="10.5" rx="2" fill="#fff"/><path d="M10 5l4-2.3v5l-4-1.5z" fill="#fff"/><circle cx="10.5" cy="10.8" r="4.6" fill="#151010"/><circle cx="10.5" cy="10.8" r="3.3" fill="none" stroke="#fff" stroke-width="1"/><path d="M8.3 13l4.4-4.4" stroke="#fff" stroke-width="1"/></svg>
<svg class="a" style="left:284.5px;top:486px" width="15" height="15" viewBox="0 0 15 15"><rect x="2.8" y="0.5" width="5" height="9" rx="2.5" fill="#fff"/><path d="M0.8 6a4.5 4.5 0 0 0 4.5 5v3" fill="none" stroke="#fff" stroke-width="1.1"/><circle cx="10" cy="10.8" r="4.6" fill="#151010"/><circle cx="10" cy="10.8" r="3.3" fill="none" stroke="#fff" stroke-width="1"/><path d="M7.8 13l4.4-4.4" stroke="#fff" stroke-width="1"/></svg>
<div class="a tile" style="left:390.5px;top:352px;width:290.5px;height:161px;background:radial-gradient(90% 110% at 100% 50%,#382828 0%,rgba(56,40,40,0) 65%),linear-gradient(135deg,#2a2a2c 0%,#25252e 45%,#2a2628 100%);"></div>
<svg class="a" style="left:495.75px;top:392.5px" width="80" height="80" viewBox="0 0 80 80"><circle cx="40" cy="40" r="40" fill="#999"/><circle cx="40" cy="30" r="8.9" fill="none" stroke="#fff" stroke-width="2.3"/><path d="M26.2 43.2h27.6a3 3 0 0 1 3 3 16.8 12.6 0 0 1-33.6 0 3 3 0 0 1 3-3z" fill="none" stroke="#fff" stroke-width="2.3" stroke-linejoin="round"/></svg>
<div class="a lbl" style="left:398.5px;top:481px;width:166px;background:rgba(14,10,10,.68)"><span style="display:inline-block;transform:scaleX(0.915);transform-origin:0 50%">César Larrea (Unverified)</span></div>
<svg class="a" style="left:543.5px;top:486px" width="15" height="15" viewBox="0 0 15 15"><rect x="0.5" y="1.5" width="9" height="10.5" rx="2" fill="#fff"/><path d="M10 5l4-2.3v5l-4-1.5z" fill="#fff"/><circle cx="10.5" cy="10.8" r="4.6" fill="#151010"/><circle cx="10.5" cy="10.8" r="3.3" fill="none" stroke="#fff" stroke-width="1"/><path d="M8.3 13l4.4-4.4" stroke="#fff" stroke-width="1"/></svg>
<div class="a tile" style="left:685px;top:352px;width:290.5px;height:161px;background:radial-gradient(120% 100% at 50% 100%,#362a28 0%,rgba(54,42,40,0) 70%),linear-gradient(180deg,#262626 0%,#2e2827 100%);border:3px solid #f4b93c;"></div>
<svg class="a" style="left:790.25px;top:392.5px" width="80" height="80" viewBox="0 0 80 80"><circle cx="40" cy="40" r="40" fill="#999"/><circle cx="40" cy="30" r="8.9" fill="none" stroke="#fff" stroke-width="2.3"/><path d="M26.2 43.2h27.6a3 3 0 0 1 3 3 16.8 12.6 0 0 1-33.6 0 3 3 0 0 1 3-3z" fill="none" stroke="#fff" stroke-width="2.3" stroke-linejoin="round"/></svg>
<div class="a lbl" style="left:693px;top:481px;width:161px;background:rgba(14,10,10,.68)"><span style="display:inline-block;transform:scaleX(0.928);transform-origin:0 50%">Juliana (Unverified)</span></div>
<svg class="a" style="left:809px;top:486px" width="15" height="15" viewBox="0 0 15 15"><rect x="0.5" y="1.5" width="9" height="10.5" rx="2" fill="#fff"/><path d="M10 5l4-2.3v5l-4-1.5z" fill="#fff"/><circle cx="10.5" cy="10.8" r="4.6" fill="#151010"/><circle cx="10.5" cy="10.8" r="3.3" fill="none" stroke="#fff" stroke-width="1"/><path d="M8.3 13l4.4-4.4" stroke="#fff" stroke-width="1"/></svg>
<svg class="a" style="left:834.5px;top:486px" width="15" height="15" viewBox="0 0 15 15"><rect x="2.8" y="0.5" width="5" height="9" rx="2.5" fill="#fff"/><path d="M0.8 6a4.5 4.5 0 0 0 4.5 5v3" fill="none" stroke="#fff" stroke-width="1.1"/><circle cx="10" cy="10.8" r="4.6" fill="#151010"/><circle cx="10" cy="10.8" r="3.3" fill="none" stroke="#fff" stroke-width="1"/><path d="M7.8 13l4.4-4.4" stroke="#fff" stroke-width="1"/></svg>
<div class="a tile" style="left:979.5px;top:352px;width:290.5px;height:161px;background:radial-gradient(80% 90% at 35% 100%,#2b3735 0%,rgba(43,55,53,0) 100%),linear-gradient(160deg,#252629 0%,#262b2d 60%,#2a302f 100%);"></div>
<div class="a av" style="left:1084.75px;top:392.5px;background:#fae0da;color:#8a3a2c;font-size:31px;font-weight:bold;line-height:80px;text-align:center;letter-spacing:-0.5px"><span style="display:inline-block;transform:scaleX(.78)">JJ</span></div>
<div class="a lbl" style="left:987.5px;top:481px;width:223px;background:rgba(14,10,10,.68)"><span style="display:inline-block;transform:scaleX(0.915);transform-origin:0 50%">Josuany Carranza J (Unverified)</span></div>
<svg class="a" style="left:1165.5px;top:486px" width="15" height="15" viewBox="0 0 15 15"><rect x="0.5" y="1.5" width="9" height="10.5" rx="2" fill="#fff"/><path d="M10 5l4-2.3v5l-4-1.5z" fill="#fff"/><circle cx="10.5" cy="10.8" r="4.6" fill="#151010"/><circle cx="10.5" cy="10.8" r="3.3" fill="none" stroke="#fff" stroke-width="1"/><path d="M8.3 13l4.4-4.4" stroke="#fff" stroke-width="1"/></svg>
<svg class="a" style="left:1191.0px;top:486px" width="15" height="15" viewBox="0 0 15 15"><rect x="2.8" y="0.5" width="5" height="9" rx="2.5" fill="#fff"/><path d="M0.8 6a4.5 4.5 0 0 0 4.5 5v3" fill="none" stroke="#fff" stroke-width="1.1"/><circle cx="10" cy="10.8" r="4.6" fill="#151010"/><circle cx="10" cy="10.8" r="3.3" fill="none" stroke="#fff" stroke-width="1"/><path d="M7.8 13l4.4-4.4" stroke="#fff" stroke-width="1"/></svg>
<div class="a" style="left:106px;top:362px;width:37px;height:27px;border-radius:14px;background:#2f2f2f;border:1.5px solid #6b6b6b"></div>
<div class="a" style="left:114px;top:368px;font-size:13px;font-weight:bold;color:#fff;line-height:14px">1</div>
<svg class="a" style="left:124px;top:366px" width="15" height="17" viewBox="0 0 15 17"><path d="M3 9V3.2a1.1 1.1 0 0 1 2.2 0V2a1.1 1.1 0 0 1 2.2 0v.8a1.1 1.1 0 0 1 2.2 0V4a1.1 1.1 0 0 1 2.2 0v5l1.2-1.8a1.1 1.1 0 0 1 1.8 1.2L12 13.5A5 5 0 0 1 7.5 16.5 4.5 4.5 0 0 1 3 12z" fill="#f6b73a"/></svg>
<div class="a" style="left:695px;top:362px;width:37px;height:27px;border-radius:14px;background:#2f2f2f;border:1.5px solid #6b6b6b"></div>
<div class="a" style="left:703px;top:368px;font-size:13px;font-weight:bold;color:#fff;line-height:14px">2</div>
<svg class="a" style="left:713px;top:366px" width="15" height="17" viewBox="0 0 15 17"><path d="M3 9V3.2a1.1 1.1 0 0 1 2.2 0V2a1.1 1.1 0 0 1 2.2 0v.8a1.1 1.1 0 0 1 2.2 0V4a1.1 1.1 0 0 1 2.2 0v5l1.2-1.8a1.1 1.1 0 0 1 1.8 1.2L12 13.5A5 5 0 0 1 7.5 16.5 4.5 4.5 0 0 1 3 12z" fill="#f6b73a"/></svg>
<div class="a" style="left:979.5px;top:186px;width:290.5px;height:162px;border-radius:7px;border:3px solid #7f85f5;background:#141414"></div>
<div class="a" id="vid" style="left:983.5px;top:190px;width:282.5px;height:154px;border-radius:4px;overflow:hidden;background:#f2f2f2"><svg width="282.5" height="153.5" viewBox="0 0 282.5 153.5"><defs><linearGradient id="hx" x1="0" y1="0" x2="1" y2="1"><stop offset="0" stop-color="#fefefe"/><stop offset="1" stop-color="#ededed"/></linearGradient><linearGradient id="hx2" x1="0" y1="0" x2="1" y2="1"><stop offset="0" stop-color="#e6e6e6"/><stop offset="1" stop-color="#f8f8f8"/></linearGradient><radialGradient id="skin" cx=".5" cy=".4" r=".7"><stop offset="0" stop-color="#d2a898"/><stop offset="1" stop-color="#a87868"/></radialGradient></defs><rect width="282.5" height="153.5" fill="#efefef"/><polygon points="-10.6,-27.2 1.1,-20.5 1.1,-7.0 -10.6,-0.3 -22.2,-7.0 -22.2,-20.5" fill="url(#hx)"/><polygon points="14.6,-27.2 26.2,-20.5 26.2,-7.0 14.6,-0.3 2.9,-7.0 2.9,-20.5" fill="url(#hx)"/><polygon points="39.7,-27.2 51.4,-20.5 51.4,-7.0 39.7,-0.3 28.0,-7.0 28.0,-20.5" fill="url(#hx2)"/><polygon points="64.8,-27.2 76.5,-20.5 76.5,-7.0 64.8,-0.3 53.1,-7.0 53.1,-20.5" fill="url(#hx)"/><polygon points="89.9,-27.2 101.6,-20.5 101.6,-7.0 89.9,-0.3 78.2,-7.0 78.2,-20.5" fill="url(#hx)"/><polygon points="115.0,-27.2 126.7,-20.5 126.7,-7.0 115.0,-0.3 103.3,-7.0 103.3,-20.5" fill="url(#hx)"/><polygon points="140.1,-27.2 151.8,-20.5 151.8,-7.0 140.1,-0.3 128.5,-7.0 128.5,-20.5" fill="url(#hx)"/><polygon points="165.2,-27.2 176.9,-20.5 176.9,-7.0 165.2,-0.3 153.6,-7.0 153.6,-20.5" fill="url(#hx)"/><polygon points="190.4,-27.2 202.0,-20.5 202.0,-7.0 190.4,-0.3 178.7,-7.0 178.7,-20.5" fill="url(#hx)"/><polygon points="215.5,-27.2 227.2,-20.5 227.2,-7.0 215.5,-0.3 203.8,-7.0 203.8,-20.5" fill="url(#hx)"/><polygon points="240.6,-27.2 252.3,-20.5 252.3,-7.0 240.6,-0.3 228.9,-7.0 228.9,-20.5" fill="url(#hx)"/><polygon points="265.7,-27.2 277.4,-20.5 277.4,-7.0 265.7,-0.3 254.0,-7.0 254.0,-20.5" fill="url(#hx)"/><polygon points="290.8,-27.2 302.5,-20.5 302.5,-7.0 290.8,-0.3 279.1,-7.0 279.1,-20.5" fill="url(#hx)"/><polygon points="-23.1,-5.5 -11.4,1.3 -11.4,14.7 -23.1,21.5 -34.8,14.7 -34.8,1.3" fill="#fbfbfb"/><polygon points="2.0,-5.5 13.7,1.3 13.7,14.7 2.0,21.5 -9.7,14.7 -9.7,1.3" fill="url(#hx)"/><polygon points="27.1,-5.5 38.8,1.3 38.8,14.7 27.1,21.5 15.4,14.7 15.4,1.3" fill="url(#hx)"/><polygon points="52.2,-5.5 63.9,1.3 63.9,14.7 52.2,21.5 40.6,14.7 40.6,1.3" fill="url(#hx2)"/><polygon points="77.3,-5.5 89.0,1.3 89.0,14.7 77.3,21.5 65.7,14.7 65.7,1.3" fill="#fbfbfb"/><polygon points="102.5,-5.5 114.1,1.3 114.1,14.7 102.5,21.5 90.8,14.7 90.8,1.3" fill="url(#hx2)"/><polygon points="127.6,-5.5 139.3,1.3 139.3,14.7 127.6,21.5 115.9,14.7 115.9,1.3" fill="url(#hx)"/><polygon points="152.7,-5.5 164.4,1.3 164.4,14.7 152.7,21.5 141.0,14.7 141.0,1.3" fill="#fbfbfb"/><polygon points="177.8,-5.5 189.5,1.3 189.5,14.7 177.8,21.5 166.1,14.7 166.1,1.3" fill="url(#hx)"/><polygon points="202.9,-5.5 214.6,1.3 214.6,14.7 202.9,21.5 191.2,14.7 191.2,1.3" fill="#fbfbfb"/><polygon points="228.0,-5.5 239.7,1.3 239.7,14.7 228.0,21.5 216.4,14.7 216.4,1.3" fill="url(#hx)"/><polygon points="253.1,-5.5 264.8,1.3 264.8,14.7 253.1,21.5 241.5,14.7 241.5,1.3" fill="url(#hx)"/><polygon points="278.3,-5.5 289.9,1.3 289.9,14.7 278.3,21.5 266.6,14.7 266.6,1.3" fill="url(#hx)"/><polygon points="-10.6,16.3 1.1,23.0 1.1,36.5 -10.6,43.2 -22.2,36.5 -22.2,23.0" fill="url(#hx)"/><polygon points="14.6,16.3 26.2,23.0 26.2,36.5 14.6,43.2 2.9,36.5 2.9,23.0" fill="#fbfbfb"/><polygon points="39.7,16.3 51.4,23.0 51.4,36.5 39.7,43.2 28.0,36.5 28.0,23.0" fill="url(#hx)"/><polygon points="64.8,16.3 76.5,23.0 76.5,36.5 64.8,43.2 53.1,36.5 53.1,23.0" fill="url(#hx2)"/><polygon points="89.9,16.3 101.6,23.0 101.6,36.5 89.9,43.2 78.2,36.5 78.2,23.0" fill="url(#hx2)"/><polygon points="115.0,16.3 126.7,23.0 126.7,36.5 115.0,43.2 103.3,36.5 103.3,23.0" fill="url(#hx)"/><polygon points="140.1,16.3 151.8,23.0 151.8,36.5 140.1,43.2 128.5,36.5 128.5,23.0" fill="url(#hx)"/><polygon points="165.2,16.3 176.9,23.0 176.9,36.5 165.2,43.2 153.6,36.5 153.6,23.0" fill="url(#hx)"/><polygon points="190.4,16.3 202.0,23.0 202.0,36.5 190.4,43.2 178.7,36.5 178.7,23.0" fill="url(#hx)"/><polygon points="215.5,16.3 227.2,23.0 227.2,36.5 215.5,43.2 203.8,36.5 203.8,23.0" fill="url(#hx)"/><polygon points="240.6,16.3 252.3,23.0 252.3,36.5 240.6,43.2 228.9,36.5 228.9,23.0" fill="url(#hx2)"/><polygon points="265.7,16.3 277.4,23.0 277.4,36.5 265.7,43.2 254.0,36.5 254.0,23.0" fill="url(#hx)"/><polygon points="290.8,16.3 302.5,23.0 302.5,36.5 290.8,43.2 279.1,36.5 279.1,23.0" fill="url(#hx)"/><polygon points="-23.1,38.0 -11.4,44.8 -11.4,58.2 -23.1,65.0 -34.8,58.2 -34.8,44.8" fill="url(#hx2)"/><polygon points="2.0,38.0 13.7,44.8 13.7,58.2 2.0,65.0 -9.7,58.2 -9.7,44.8" fill="url(#hx)"/><polygon points="27.1,38.0 38.8,44.8 38.8,58.2 27.1,65.0 15.4,58.2 15.4,44.8" fill="url(#hx)"/><polygon points="52.2,38.0 63.9,44.8 63.9,58.2 52.2,65.0 40.6,58.2 40.6,44.8" fill="url(#hx2)"/><polygon points="77.3,38.0 89.0,44.8 89.0,58.2 77.3,65.0 65.7,58.2 65.7,44.8" fill="url(#hx2)"/><polygon points="102.5,38.0 114.1,44.8 114.1,58.2 102.5,65.0 90.8,58.2 90.8,44.8" fill="url(#hx)"/><polygon points="127.6,38.0 139.3,44.8 139.3,58.2 127.6,65.0 115.9,58.2 115.9,44.8" fill="url(#hx2)"/><polygon points="152.7,38.0 164.4,44.8 164.4,58.2 152.7,65.0 141.0,58.2 141.0,44.8" fill="url(#hx)"/><polygon points="177.8,38.0 189.5,44.8 189.5,58.2 177.8,65.0 166.1,58.2 166.1,44.8" fill="#fbfbfb"/><polygon points="202.9,38.0 214.6,44.8 214.6,58.2 202.9,65.0 191.2,58.2 191.2,44.8" fill="url(#hx2)"/><polygon points="228.0,38.0 239.7,44.8 239.7,58.2 228.0,65.0 216.4,58.2 216.4,44.8" fill="url(#hx)"/><polygon points="253.1,38.0 264.8,44.8 264.8,58.2 253.1,65.0 241.5,58.2 241.5,44.8" fill="#fbfbfb"/><polygon points="278.3,38.0 289.9,44.8 289.9,58.2 278.3,65.0 266.6,58.2 266.6,44.8" fill="url(#hx)"/><polygon points="-10.6,59.8 1.1,66.5 1.1,80.0 -10.6,86.7 -22.2,80.0 -22.2,66.5" fill="url(#hx)"/><polygon points="14.6,59.8 26.2,66.5 26.2,80.0 14.6,86.7 2.9,80.0 2.9,66.5" fill="url(#hx2)"/><polygon points="39.7,59.8 51.4,66.5 51.4,80.0 39.7,86.7 28.0,80.0 28.0,66.5" fill="url(#hx)"/><polygon points="64.8,59.8 76.5,66.5 76.5,80.0 64.8,86.7 53.1,80.0 53.1,66.5" fill="url(#hx)"/><polygon points="89.9,59.8 101.6,66.5 101.6,80.0 89.9,86.7 78.2,80.0 78.2,66.5" fill="url(#hx)"/><polygon points="115.0,59.8 126.7,66.5 126.7,80.0 115.0,86.7 103.3,80.0 103.3,66.5" fill="url(#hx2)"/><polygon points="140.1,59.8 151.8,66.5 151.8,80.0 140.1,86.7 128.5,80.0 128.5,66.5" fill="url(#hx2)"/><polygon points="165.2,59.8 176.9,66.5 176.9,80.0 165.2,86.7 153.6,80.0 153.6,66.5" fill="url(#hx2)"/><polygon points="190.4,59.8 202.0,66.5 202.0,80.0 190.4,86.7 178.7,80.0 178.7,66.5" fill="#fbfbfb"/><polygon points="215.5,59.8 227.2,66.5 227.2,80.0 215.5,86.7 203.8,80.0 203.8,66.5" fill="url(#hx)"/><polygon points="240.6,59.8 252.3,66.5 252.3,80.0 240.6,86.7 228.9,80.0 228.9,66.5" fill="url(#hx2)"/><polygon points="265.7,59.8 277.4,66.5 277.4,80.0 265.7,86.7 254.0,80.0 254.0,66.5" fill="url(#hx2)"/><polygon points="290.8,59.8 302.5,66.5 302.5,80.0 290.8,86.7 279.1,80.0 279.1,66.5" fill="url(#hx2)"/><polygon points="-23.1,81.5 -11.4,88.3 -11.4,101.7 -23.1,108.5 -34.8,101.7 -34.8,88.3" fill="url(#hx)"/><polygon points="2.0,81.5 13.7,88.3 13.7,101.7 2.0,108.5 -9.7,101.7 -9.7,88.3" fill="#fbfbfb"/><polygon points="27.1,81.5 38.8,88.3 38.8,101.7 27.1,108.5 15.4,101.7 15.4,88.3" fill="#fbfbfb"/><polygon points="52.2,81.5 63.9,88.3 63.9,101.7 52.2,108.5 40.6,101.7 40.6,88.3" fill="url(#hx)"/><polygon points="77.3,81.5 89.0,88.3 89.0,101.7 77.3,108.5 65.7,101.7 65.7,88.3" fill="url(#hx2)"/><polygon points="102.5,81.5 114.1,88.3 114.1,101.7 102.5,108.5 90.8,101.7 90.8,88.3" fill="url(#hx)"/><polygon points="127.6,81.5 139.3,88.3 139.3,101.7 127.6,108.5 115.9,101.7 115.9,88.3" fill="url(#hx2)"/><polygon points="152.7,81.5 164.4,88.3 164.4,101.7 152.7,108.5 141.0,101.7 141.0,88.3" fill="url(#hx2)"/><polygon points="177.8,81.5 189.5,88.3 189.5,101.7 177.8,108.5 166.1,101.7 166.1,88.3" fill="#fbfbfb"/><polygon points="202.9,81.5 214.6,88.3 214.6,101.7 202.9,108.5 191.2,101.7 191.2,88.3" fill="#fbfbfb"/><polygon points="228.0,81.5 239.7,88.3 239.7,101.7 228.0,108.5 216.4,101.7 216.4,88.3" fill="url(#hx)"/><polygon points="253.1,81.5 264.8,88.3 264.8,101.7 253.1,108.5 241.5,101.7 241.5,88.3" fill="url(#hx)"/><polygon points="278.3,81.5 289.9,88.3 289.9,101.7 278.3,108.5 266.6,101.7 266.6,88.3" fill="url(#hx2)"/><polygon points="-10.6,103.3 1.1,110.0 1.1,123.5 -10.6,130.2 -22.2,123.5 -22.2,110.0" fill="url(#hx)"/><polygon points="14.6,103.3 26.2,110.0 26.2,123.5 14.6,130.2 2.9,123.5 2.9,110.0" fill="url(#hx)"/><polygon points="39.7,103.3 51.4,110.0 51.4,123.5 39.7,130.2 28.0,123.5 28.0,110.0" fill="url(#hx)"/><polygon points="64.8,103.3 76.5,110.0 76.5,123.5 64.8,130.2 53.1,123.5 53.1,110.0" fill="url(#hx)"/><polygon points="89.9,103.3 101.6,110.0 101.6,123.5 89.9,130.2 78.2,123.5 78.2,110.0" fill="url(#hx)"/><polygon points="115.0,103.3 126.7,110.0 126.7,123.5 115.0,130.2 103.3,123.5 103.3,110.0" fill="url(#hx2)"/><polygon points="140.1,103.3 151.8,110.0 151.8,123.5 140.1,130.2 128.5,123.5 128.5,110.0" fill="url(#hx)"/><polygon points="165.2,103.3 176.9,110.0 176.9,123.5 165.2,130.2 153.6,123.5 153.6,110.0" fill="url(#hx)"/><polygon points="190.4,103.3 202.0,110.0 202.0,123.5 190.4,130.2 178.7,123.5 178.7,110.0" fill="url(#hx)"/><polygon points="215.5,103.3 227.2,110.0 227.2,123.5 215.5,130.2 203.8,123.5 203.8,110.0" fill="#fbfbfb"/><polygon points="240.6,103.3 252.3,110.0 252.3,123.5 240.6,130.2 228.9,123.5 228.9,110.0" fill="url(#hx)"/><polygon points="265.7,103.3 277.4,110.0 277.4,123.5 265.7,130.2 254.0,123.5 254.0,110.0" fill="url(#hx)"/><polygon points="290.8,103.3 302.5,110.0 302.5,123.5 290.8,130.2 279.1,123.5 279.1,110.0" fill="url(#hx)"/><polygon points="-23.1,125.0 -11.4,131.8 -11.4,145.2 -23.1,152.0 -34.8,145.2 -34.8,131.8" fill="#fbfbfb"/><polygon points="2.0,125.0 13.7,131.8 13.7,145.2 2.0,152.0 -9.7,145.2 -9.7,131.8" fill="#fbfbfb"/><polygon points="27.1,125.0 38.8,131.8 38.8,145.2 27.1,152.0 15.4,145.2 15.4,131.8" fill="#fbfbfb"/><polygon points="52.2,125.0 63.9,131.8 63.9,145.2 52.2,152.0 40.6,145.2 40.6,131.8" fill="url(#hx)"/><polygon points="77.3,125.0 89.0,131.8 89.0,145.2 77.3,152.0 65.7,145.2 65.7,131.8" fill="url(#hx)"/><polygon points="102.5,125.0 114.1,131.8 114.1,145.2 102.5,152.0 90.8,145.2 90.8,131.8" fill="url(#hx)"/><polygon points="127.6,125.0 139.3,131.8 139.3,145.2 127.6,152.0 115.9,145.2 115.9,131.8" fill="#fbfbfb"/><polygon points="152.7,125.0 164.4,131.8 164.4,145.2 152.7,152.0 141.0,145.2 141.0,131.8" fill="#fbfbfb"/><polygon points="177.8,125.0 189.5,131.8 189.5,145.2 177.8,152.0 166.1,145.2 166.1,131.8" fill="url(#hx)"/><polygon points="202.9,125.0 214.6,131.8 214.6,145.2 202.9,152.0 191.2,145.2 191.2,131.8" fill="url(#hx)"/><polygon points="228.0,125.0 239.7,131.8 239.7,145.2 228.0,152.0 216.4,145.2 216.4,131.8" fill="url(#hx)"/><polygon points="253.1,125.0 264.8,131.8 264.8,145.2 253.1,152.0 241.5,145.2 241.5,131.8" fill="url(#hx)"/><polygon points="278.3,125.0 289.9,131.8 289.9,145.2 278.3,152.0 266.6,145.2 266.6,131.8" fill="url(#hx)"/><polygon points="-10.6,146.8 1.1,153.5 1.1,167.0 -10.6,173.7 -22.2,167.0 -22.2,153.5" fill="url(#hx2)"/><polygon points="14.6,146.8 26.2,153.5 26.2,167.0 14.6,173.7 2.9,167.0 2.9,153.5" fill="url(#hx)"/><polygon points="39.7,146.8 51.4,153.5 51.4,167.0 39.7,173.7 28.0,167.0 28.0,153.5" fill="url(#hx)"/><polygon points="64.8,146.8 76.5,153.5 76.5,167.0 64.8,173.7 53.1,167.0 53.1,153.5" fill="url(#hx)"/><polygon points="89.9,146.8 101.6,153.5 101.6,167.0 89.9,173.7 78.2,167.0 78.2,153.5" fill="url(#hx)"/><polygon points="115.0,146.8 126.7,153.5 126.7,167.0 115.0,173.7 103.3,167.0 103.3,153.5" fill="url(#hx2)"/><polygon points="140.1,146.8 151.8,153.5 151.8,167.0 140.1,173.7 128.5,167.0 128.5,153.5" fill="#fbfbfb"/><polygon points="165.2,146.8 176.9,153.5 176.9,167.0 165.2,173.7 153.6,167.0 153.6,153.5" fill="url(#hx2)"/><polygon points="190.4,146.8 202.0,153.5 202.0,167.0 190.4,173.7 178.7,167.0 178.7,153.5" fill="url(#hx)"/><polygon points="215.5,146.8 227.2,153.5 227.2,167.0 215.5,173.7 203.8,167.0 203.8,153.5" fill="url(#hx2)"/><polygon points="240.6,146.8 252.3,153.5 252.3,167.0 240.6,173.7 228.9,167.0 228.9,153.5" fill="url(#hx2)"/><polygon points="265.7,146.8 277.4,153.5 277.4,167.0 265.7,173.7 254.0,167.0 254.0,153.5" fill="url(#hx)"/><polygon points="290.8,146.8 302.5,153.5 302.5,167.0 290.8,173.7 279.1,167.0 279.1,153.5" fill="#fbfbfb"/><path d="M80.5,160.0 C90.5,136.0 108.5,126.0 128.5,123.0 L192.5,123.0 C214.5,128.0 228.5,140.0 238.5,160.0 Z" fill="#1d2030"/><path d="M120.5,128.0 C116.5,112.0 120.5,94.0 123.5,80.0 C126.5,60.0 142.5,49.0 162.5,49.0 C184.5,49.0 198.5,64.0 200.5,82.0 C204.5,102.0 204.5,118.0 194.5,130.0 L124.5,130.0 Z" fill="#2f221f"/><path d="M144.5,110.0 L178.5,110.0 L182.5,128.0 L140.5,128.0 Z" fill="#a47464"/><path d="M132.5,86.0 C132.5,66.0 144.5,59.0 162.5,59.0 C180.5,59.0 189.5,68.0 188.5,88.0 C187.5,108.0 178.5,123.0 160.5,124.0 C143.5,123.0 133.5,108.0 132.5,86.0 Z" fill="url(#skin)"/><path d="M128.5,80.0 C130.5,60.0 146.5,54.0 166.5,55.0 C180.5,56.0 190.5,64.0 192.5,76.0 C182.5,66.0 166.5,63.0 152.5,64.0 C140.5,66.0 133.5,72.0 128.5,80.0 Z" fill="#2f221f"/><path d="M134.5,81.0 L157.5,80.0 L157.5,95.0 C150.5,97.0 138.5,97.0 135.5,93.0 Z" fill="#a89a9c" fill-opacity=".35" stroke="#5a2a2e" stroke-width="1.7"/><path d="M163.5,80.0 L186.5,80.0 L185.5,93.0 C181.5,97.0 168.5,97.0 163.5,95.0 Z" fill="#a89a9c" fill-opacity=".35" stroke="#5a2a2e" stroke-width="1.7"/><path d="M157.5,84.0 L163.5,84.0" stroke="#5a2a2e" stroke-width="1.4"/><path d="M159.5,88.0 L156.5,103.0 L162.5,104.0" fill="none" stroke="#9a6a5a" stroke-width="1"/><ellipse cx="157.5" cy="115" rx="7" ry="3.6" fill="#8e2630"/><circle cx="188.5" cy="111" r="1.6" fill="#3a3a40"/><rect x="226.9" y="12.8" width="2.6" height="2.6" fill="#f06a30"/><rect x="221.6" y="14.6" width="2.6" height="2.6" fill="#f06a30"/><rect x="217.3" y="6.3" width="2.6" height="2.6" fill="#8ac040"/><rect x="222.2" y="7.2" width="2.6" height="2.6" fill="#e8443a"/><rect x="217.8" y="16.3" width="2.6" height="2.6" fill="#f0d030"/><rect x="217.8" y="12.3" width="2.6" height="2.6" fill="#e8443a"/><rect x="217.4" y="9.2" width="2.6" height="2.6" fill="#f06a30"/><rect x="218.4" y="10.0" width="2.6" height="2.6" fill="#30b0a0"/><rect x="224.3" y="14.5" width="2.6" height="2.6" fill="#f0a030"/><rect x="222.6" y="14.7" width="2.6" height="2.6" fill="#f0a030"/><rect x="218.4" y="20.0" width="2.6" height="2.6" fill="#d04090"/><rect x="222.7" y="18.8" width="2.6" height="2.6" fill="#f0d030"/><rect x="216.8" y="24.0" width="2.6" height="2.6" fill="#f0d030"/><rect x="221.2" y="18.8" width="2.6" height="2.6" fill="#e8443a"/><rect x="226.4" y="11.0" width="2.6" height="2.6" fill="#f0a030"/><rect x="225.6" y="10.2" width="2.6" height="2.6" fill="#30b0a0"/><rect x="228.3" y="12.1" width="2.6" height="2.6" fill="#8ac040"/><rect x="223.4" y="20.6" width="2.6" height="2.6" fill="#30b0a0"/><rect x="224.8" y="17.3" width="2.6" height="2.6" fill="#8ac040"/><rect x="226.1" y="9.5" width="2.6" height="2.6" fill="#f0d030"/><rect x="222.9" y="19.6" width="2.6" height="2.6" fill="#e8443a"/><rect x="226.8" y="14.4" width="2.6" height="2.6" fill="#8ac040"/><rect x="222.3" y="23.7" width="2.6" height="2.6" fill="#30b0a0"/><rect x="228.9" y="12.3" width="2.6" height="2.6" fill="#8ac040"/><rect x="217.8" y="14.4" width="2.6" height="2.6" fill="#30b0a0"/><rect x="219.2" y="17.5" width="2.6" height="2.6" fill="#e8443a"/><text x="230.5" y="15" font-family="Liberation Sans" font-size="8" font-style="italic" font-weight="bold" fill="#2b7a9e" letter-spacing="-.5">Defensoría</text><text x="232.5" y="24" font-family="Liberation Sans" font-size="8.5" font-style="italic" font-weight="bold" fill="#2b7a9e" letter-spacing="-.5">del Pueblo</text><text x="254.5" y="29" font-family="Liberation Sans" font-size="2.5" fill="#e09a30">ECUADOR</text></svg></div>
<div class="a lbl" style="left:988px;top:316px;width:179px;background:rgba(40,40,40,.62)"><span style="display:inline-block;transform:scaleX(0.935);transform-origin:0 50%">Rosa Nancy Andrade Sarmiento</span></div>
<div class="a tile" style="left:537.75px;top:517px;width:290.5px;height:162px;background:radial-gradient(100% 90% at 100% 100%,#263330 0%,rgba(38,51,48,0) 60%),radial-gradient(60% 50% at 0% 100%,#3a2a28 0%,rgba(58,42,40,0) 100%),linear-gradient(160deg,#2d2e2d 0%,#33312d 45%,#39332b 100%)"></div>
<svg class="a" style="left:643.0px;top:558px" width="80" height="80" viewBox="0 0 80 80"><circle cx="40" cy="40" r="40" fill="#999"/><circle cx="40" cy="30" r="8.9" fill="none" stroke="#fff" stroke-width="2.3"/><path d="M26.2 43.2h27.6a3 3 0 0 1 3 3 16.8 12.6 0 0 1-33.6 0 3 3 0 0 1 3-3z" fill="none" stroke="#fff" stroke-width="2.3" stroke-linejoin="round"/></svg>
<div class="a lbl" style="left:546px;top:647px;width:266px;background:rgba(14,10,10,.68)"><span style="display:inline-block;transform:scaleX(0.879);transform-origin:0 50%">GADPR HONORATO VASQUEZ LIC. VI...</span></div>
<svg class="a" style="left:767px;top:652px" width="15" height="15" viewBox="0 0 15 15"><rect x="0.5" y="1.5" width="9" height="10.5" rx="2" fill="#fff"/><path d="M10 5l4-2.3v5l-4-1.5z" fill="#fff"/><circle cx="10.5" cy="10.8" r="4.6" fill="#151010"/><circle cx="10.5" cy="10.8" r="3.3" fill="none" stroke="#fff" stroke-width="1"/><path d="M8.3 13l4.4-4.4" stroke="#fff" stroke-width="1"/></svg>
<svg class="a" style="left:792.5px;top:652px" width="15" height="15" viewBox="0 0 15 15"><rect x="2.8" y="0.5" width="5" height="9" rx="2.5" fill="#fff"/><path d="M0.8 6a4.5 4.5 0 0 0 4.5 5v3" fill="none" stroke="#fff" stroke-width="1.1"/><circle cx="10" cy="10.8" r="4.6" fill="#151010"/><circle cx="10" cy="10.8" r="3.3" fill="none" stroke="#fff" stroke-width="1"/><path d="M7.8 13l4.4-4.4" stroke="#fff" stroke-width="1"/></svg>
<svg class="a" style="left:648px;top:692px" width="9" height="13" viewBox="0 0 9 13"><path d="M7.5 1L2 6.5 7.5 12" fill="none" stroke="#6e6e6e" stroke-width="1.3"/></svg>
<div class="a" style="left:668px;top:690px;font-size:14.5px;color:#eaeaea;line-height:16px;letter-spacing:-0.1px">1/85</div>
<svg class="a" style="left:709px;top:692px" width="9" height="13" viewBox="0 0 9 13"><path d="M1.5 1L7 6.5 1.5 12" fill="none" stroke="#e0e0e0" stroke-width="1.3"/></svg>
<!-- RIGHT PANEL -->
<div class="a" style="left:1321px;top:284px;width:50px;height:349px;border-radius:4px;background:#35383d;box-shadow:0 6px 14px rgba(0,0,0,.28),0 0 4px rgba(0,0,0,.2)"></div>
<svg class="a" style="left:1338px;top:293px" width="16" height="23" viewBox="0 0 16 23"><g fill="#c9c9cd"><rect x="0" y="0" width="6.5" height="6.5" rx="2"/><rect x="9.3" y="0" width="6.5" height="6.5" rx="2"/><rect x="0" y="8.2" width="6.5" height="6.5" rx="2"/><rect x="9.3" y="8.2" width="6.5" height="6.5" rx="2"/><rect x="0" y="16.2" width="6.5" height="6.5" rx="2"/><rect x="9.3" y="16.2" width="6.5" height="6.5" rx="2"/></g></svg>
<svg class="a" style="left:1332px;top:334px" width="34" height="34" viewBox="0 0 34 34"><defs><linearGradient id="cg2" x1="0" y1="0" x2="1" y2="1"><stop offset="0" stop-color="#ff5f8a"/><stop offset="1" stop-color="#9a3ff0"/></linearGradient></defs><path d="M5 24h17a4 4 0 0 0 0-8 7 7 0 0 0-12.5-1.5A5 5 0 0 0 5 24z" fill="none" stroke="url(#cg2)" stroke-width="2.2"/><circle cx="12" cy="5" r="2" fill="none" stroke="#c050e0" stroke-width="1.2"/><circle cx="3" cy="10" r="1.5" fill="none" stroke="#8050f0" stroke-width="1.2"/><circle cx="22" cy="12" r="1.3" fill="none" stroke="#ff7090" stroke-width="1"/><circle cx="31" cy="26" r="6" fill="#1a8a48" stroke="#2bd16a" stroke-width="1.6"/></svg>
<svg class="a" style="left:1335px;top:387px" width="24" height="25" viewBox="0 0 24 25"><path d="M18 1.5l4 4-10 10-4-4z" fill="none" stroke="#c9c9cd" stroke-width="1.5" stroke-linejoin="round"/><path d="M8 11.5l-2.5 2.5 4 4L12 15.5" fill="#c9c9cd"/><path d="M5.5 14l-4 4 3 .5" fill="#c9c9cd"/><path d="M4 23.3h19" stroke="#c9c9cd" stroke-width="1.6"/></svg>
<div class="a" style="left:1334px;top:443px;width:24px;height:16px;border-radius:3px;background:#c9c9cd;color:#35383d;font-size:10.5px;font-weight:bold;line-height:16px;text-align:center;letter-spacing:-0.3px">CC</div>
<div class="a" style="left:1321px;top:492px;width:50px;text-align:center;color:#f0f0f0;font-size:9px;line-height:10.5px;white-space:nowrap"><span style="display:inline-block;transform:scaleX(.88)">Español<br>(México)</span></div>
<div class="a" style="left:1334px;top:542px;width:25px;height:25px;border-radius:3px;background:#4a86f0"></div>
<svg class="a" style="left:1338px;top:547px" width="17" height="15" viewBox="0 0 17 15"><path d="M1 2h15M1 6h15M1 10h15M1 13.5h9" stroke="#fff" stroke-width="2.2"/></svg>
<svg class="a" style="left:1335px;top:596px" width="22" height="19" viewBox="0 0 22 19"><path d="M7.5 1h7l1.5 2.5h4a1.5 1.5 0 0 1 1.5 1.5v12a1.5 1.5 0 0 1-1.5 1.5H1.5A1.5 1.5 0 0 1 0 17V5a1.5 1.5 0 0 1 1.5-1.5h4.5z" fill="#c9c9cd"/><circle cx="11" cy="11" r="4.3" fill="none" stroke="#35383d" stroke-width="2"/></svg>

<!-- TASKBAR -->
<div id="taskbar" class="a"></div>
<svg class="a" style="left:20px;top:733px" width="26" height="24" viewBox="0 0 26 24"><defs><linearGradient id="sun" x1="0" y1="0" x2="1" y2="1"><stop offset="0" stop-color="#f8c030"/><stop offset="1" stop-color="#f56a10"/></linearGradient><linearGradient id="cld" x1="0" y1="0" x2="0" y2="1"><stop offset="0" stop-color="#9cc6f4"/><stop offset="1" stop-color="#e0ecfa"/></linearGradient></defs><circle cx="12" cy="10" r="9" fill="url(#sun)"/><path d="M6 23h15a3.5 3.5 0 0 0 0-7 5.5 5.5 0 0 0-10.5-1A4 4 0 0 0 6 23z" fill="url(#cld)" stroke="#5a8fd8" stroke-width=".6"/></svg>
<div class="a" style="left:28px;top:727px;width:24px;height:16px;border-radius:8px;background:#2c2c2c"></div>
<div class="a" style="left:34px;top:729px;font-size:11.5px;color:#fff;line-height:12px">8°</div>
<svg class="a" style="left:206px;top:732px" width="24" height="24" viewBox="0 0 24 24"><defs><linearGradient id="win" x1="0" y1="0" x2="1" y2="1"><stop offset="0" stop-color="#3ccaf8"/><stop offset="1" stop-color="#1a8fe6"/></linearGradient></defs><g fill="url(#win)"><rect x="0" y="0" width="11.3" height="11.3" rx="1"/><rect x="12.7" y="0" width="11.3" height="11.3" rx="1"/><rect x="0" y="12.7" width="11.3" height="11.3" rx="1"/><rect x="12.7" y="12.7" width="11.3" height="11.3" rx="1"/></g></svg>
<div class="a" style="left:243px;top:728px;width:220px;height:32px;border-radius:16px;background:#323232;border:1px solid #414141"></div>
<svg class="a" style="left:254px;top:735px" width="16" height="17" viewBox="0 0 16 17"><circle cx="6.5" cy="6.5" r="5.3" fill="none" stroke="#e6e6e6" stroke-width="1.7"/><path d="M10.3 10.6L15 15.5" stroke="#e6e6e6" stroke-width="1.8"/></svg>
<div class="a" style="left:280px;top:736px;font-size:14px;color:#e0e0e0;line-height:16px;letter-spacing:-0.5px">Buscar</div>
<svg class="a" style="left:409px;top:729px" width="50" height="28" viewBox="0 0 50 28"><defs><radialGradient id="snow" cx=".5" cy=".6" r=".6"><stop offset="0" stop-color="#c8d4f8"/><stop offset=".7" stop-color="#6a78c8"/><stop offset="1" stop-color="#3a4070" stop-opacity="0"/></radialGradient></defs><ellipse cx="25" cy="16" rx="24" ry="11" fill="url(#snow)"/><path d="M3 21q10-14 22-14t22 14z" fill="#d8e2fa"/><path d="M12 20l3-5 3 5zM30 19l2.5-4 2.5 4zM36 21l2-3 2 3z" fill="#2a6a50"/><rect x="18" y="17" width="6" height="4" fill="#7a4a30"/><circle cx="38" cy="6" r=".8" fill="#fff"/><circle cx="30" cy="4" r=".6" fill="#fff"/></svg>
<!-- task icons -->
<svg class="a" style="left:475px;top:732px" width="25" height="23" viewBox="0 0 25 23"><rect x="0" y="6" width="16" height="16" rx="1.5" fill="#7a7a7a"/><rect x="8" y="0" width="17" height="16" rx="1.5" fill="#e8e8e8"/></svg>
<svg class="a" style="left:520px;top:733px" width="23" height="22" viewBox="0 0 23 22"><defs><linearGradient id="cp1" x1="0" y1="0" x2="0" y2="1"><stop offset="0" stop-color="#18a8ff"/><stop offset=".55" stop-color="#5cc85a"/><stop offset="1" stop-color="#ffd000"/></linearGradient><linearGradient id="cp2" x1="0" y1="0" x2="0" y2="1"><stop offset="0" stop-color="#b05cf0"/><stop offset=".5" stop-color="#f0609a"/><stop offset="1" stop-color="#ffa040"/></linearGradient></defs><path d="M5 .8h10.5c1.5 0 2.3 1 2 2.3L14 15H2.2C.9 15 0 14 .3 12.7L3 2.6C3.3 1.5 4 .8 5 .8z" fill="url(#cp1)"/><path d="M9 7h11.6c1.3 0 2.2 1 1.9 2.3L19.8 19.4c-.3 1.1-1 1.8-2 1.8H6.5c-1.3 0-2.2-1-1.9-2.3z" fill="url(#cp2)"/><path d="M8.6 7H14l-1.6 8H6.6z" fill="#1c1c1c" opacity=".85"/></svg>
<svg class="a" style="left:563px;top:732px" width="24" height="24" viewBox="0 0 24 24"><rect width="24" height="24" fill="#ee4a1c"/><path d="M4.5 22l.8-9.5c.3-3 2.2-4.8 4.5-5.5l1.5 14.5z" fill="#fff"/><path d="M12.3 2l7.5 2.2-.8 10.5-4.8 5.3-1.2-10.5-1.5-.8z" fill="#fff"/></svg>
<svg class="a" style="left:607px;top:732px" width="25" height="23" viewBox="0 0 25 23"><circle cx="20" cy="5" r="3" fill="#7b83eb"/><circle cx="13.5" cy="4" r="4" fill="#5059c9"/><rect x="15" y="9" width="9.5" height="10" rx="3" fill="#7b83eb"/><rect x="8" y="8.5" width="12" height="13.5" rx="4" fill="#5059c9"/><rect x="1" y="6" width="13" height="13" rx="1.5" fill="#4b53bc"/><path d="M4 9.5h7M7.5 9.5v7" stroke="#fff" stroke-width="2"/></svg>
<svg class="a" style="left:651px;top:732px" width="25" height="23" viewBox="0 0 25 23"><path d="M0 2.5A1.5 1.5 0 0 1 1.5 1h7l2.5 3h12.5A1.5 1.5 0 0 1 25 5.5V21a1.5 1.5 0 0 1-1.5 1.5h-22A1.5 1.5 0 0 1 0 21z" fill="#f0b429"/><path d="M0 8h25v13a1.5 1.5 0 0 1-1.5 1.5h-22A1.5 1.5 0 0 1 0 21z" fill="#ffd35c"/><rect x="7" y="13" width="11" height="8" rx="1" fill="#1b84d8"/></svg>
<svg class="a" style="left:695px;top:732px" width="25" height="23" viewBox="0 0 25 23"><rect x="6" y="0" width="19" height="23" rx="1.5" fill="#21a366"/><rect x="15" y="0" width="10" height="11.5" fill="#33c481"/><rect x="6" y="11.5" width="9" height="11.5" fill="#107c41"/><rect x="15" y="11.5" width="10" height="11.5" fill="#185c37"/><rect x="0" y="4.5" width="13" height="14" rx="1.5" fill="#107c41"/><path d="M3.5 8l6 7M9.5 8l-6 7" stroke="#fff" stroke-width="1.8"/></svg>
<svg class="a" style="left:739px;top:731px" width="25" height="25" viewBox="0 0 25 25"><defs><linearGradient id="edg1" x1="0" y1="0" x2="1" y2="1"><stop offset="0" stop-color="#35c1f1"/><stop offset="1" stop-color="#1170cf"/></linearGradient><linearGradient id="edg2" x1="0" y1="0" x2="1" y2="0"><stop offset="0" stop-color="#0c59a4"/><stop offset="1" stop-color="#114a8b"/></linearGradient></defs><path d="M12.5 0.5A12 12 0 1 0 23 18.5c-3 2-9 2.5-11-1.5-1.5-3 .5-6 4-6.5 4-.5 8 1 8.5 2.5A12 12 0 0 0 12.5.5z" fill="url(#edg1)"/><path d="M2 16c2 6 10 9 16 6-5 1-9-2-9-6 0-3 2-5 5-5-5-1-10 1-12 5z" fill="#2aca6a"/><path d="M14 11c-3 0-5 2-5 5 0 4 4 7 9 6 2-.5 4-2 5-3.5-3 1.5-7 1-9-2-1-2 0-5 0-5.5z" fill="url(#edg2)"/></svg>
<svg class="a" style="left:783px;top:732px" width="25" height="23" viewBox="0 0 25 23"><rect x="6" y="0" width="19" height="23" rx="1.5" fill="#41a5ee"/><rect x="6" y="6" width="19" height="6" fill="#2b7cd3"/><rect x="6" y="12" width="19" height="6" fill="#185abd"/><rect x="6" y="18" width="19" height="5" rx="1" fill="#103f91"/><rect x="0" y="4.5" width="13" height="14" rx="1.5" fill="#185abd"/><path d="M2.5 8l1.8 7 2.2-5.5 2.2 5.5 1.8-7" fill="none" stroke="#fff" stroke-width="1.5"/></svg>
<svg class="a" style="left:827px;top:731px" width="25" height="25" viewBox="0 0 25 25"><defs><radialGradient id="ff" cx=".7" cy=".2" r="1"><stop offset="0" stop-color="#ffde3a"/><stop offset=".4" stop-color="#ff7a1a"/><stop offset=".8" stop-color="#f0244a"/></radialGradient></defs><path d="M12.5 24A11.5 11.5 0 0 1 1.5 10c.5-3 2-5 3-6 0 2 1 3 2 3.5 1-3 3-5.5 6-7 0 3 2 4 4 5 4 2 7 5 7 9A11.5 11.5 0 0 1 12.5 24z" fill="url(#ff)"/><circle cx="12" cy="14" r="6" fill="#7a3dcf"/><path d="M7 12c2-3 7-3 9 0-2-1-5-1-6 1z" fill="#ff9a2a"/></svg>
<svg class="a" style="left:870px;top:731px" width="26" height="26" viewBox="0 0 26 26"><circle cx="13" cy="13" r="12.5" fill="#db4437"/><path d="M13 13L2.2 6.8A12.5 12.5 0 0 0 13 25.5z" fill="#0f9d58"/><path d="M13 13v12.5A12.5 12.5 0 0 0 23.8 6.8z" fill="#ffcd40"/><path d="M13 13h10.8A12.5 12.5 0 0 0 23.8 6.8L13 13z" fill="#ffcd40"/><path d="M13 .5A12.5 12.5 0 0 0 2.2 6.8L7.6 16 13 6.8h10.8A12.5 12.5 0 0 0 13 .5z" fill="#db4437"/><path d="M2.2 6.8A12.5 12.5 0 0 0 13 25.5l5.4-9.2L13 13 7.6 16z" fill="#0f9d58"/><path d="M23.8 6.8H13l5.4 9.5-5.4 9.2A12.5 12.5 0 0 0 23.8 6.8z" fill="#ffcd40"/><circle cx="13" cy="13" r="5.6" fill="#fff"/><circle cx="13" cy="13" r="4.5" fill="#4285f4"/></svg>
<svg class="a" style="left:914px;top:731px" width="26" height="26" viewBox="0 0 26 26"><circle cx="13" cy="13" r="12.5" fill="#1ed760"/><path d="M6 9.5c5-1.5 10-1 14 1.5M6.8 13.5c4-1 8-.8 11.5 1.2M7.5 17.2c3.2-.8 6.3-.6 9 1" fill="none" stroke="#111" stroke-width="2.1" stroke-linecap="round"/></svg>
<div class="a" style="left:923px;top:759px;width:8px;height:3px;border-radius:2px;background:#9a9a9a"></div>
<div class="a" style="left:952px;top:724px;width:39px;height:41px;border-radius:4px;background:#2a2a2a;border:1px solid #333"></div>
<svg class="a" style="left:958px;top:731px" width="26" height="26" viewBox="0 0 26 26"><circle cx="13" cy="13" r="12.5" fill="#db4437"/><path d="M2.2 6.8A12.5 12.5 0 0 0 13 25.5l5.4-9.2L13 13 7.6 16z" fill="#0f9d58"/><path d="M23.8 6.8H13l5.4 9.5-5.4 9.2A12.5 12.5 0 0 0 23.8 6.8z" fill="#ffcd40"/><circle cx="13" cy="13" r="5.6" fill="#fff"/><circle cx="13" cy="13" r="4.5" fill="#4285f4"/></svg>
<svg class="a" style="left:970px;top:726px" width="18" height="18" viewBox="0 0 18 18"><circle cx="9" cy="9" r="8.5" fill="#555"/><path d="M4 6l2.5-3 2.5 2 2.5-2 2.5 3-1 4 1 4-3 2.5h-4L4 14l1-4z" fill="#ddd"/><path d="M6 8h6M7 11h4" stroke="#333" stroke-width="1"/></svg>
<div class="a" style="left:963px;top:759px;width:16px;height:3px;border-radius:2px;background:#5ccdf5"></div>
<svg class="a" style="left:1003px;top:732px" width="25" height="24" viewBox="0 0 25 24"><circle cx="12" cy="12" r="11.3" fill="#2a282b" stroke="#e0e0e0" stroke-width="1.3"/><circle cx="12" cy="12" r="3.2" fill="none" stroke="#e0e0e0" stroke-width="1.3"/><path d="M9 9.5A6 6 0 0 1 14 3.5M15 12.5a6 6 0 0 1-1 7M9.5 14a6 6 0 0 1-6-3" fill="none" stroke="#e0e0e0" stroke-width="1.5"/></svg>
<div class="a" style="left:1017px;top:728px;width:13px;height:13px;border-radius:50%;background:#e8141e"></div>
<div class="a" style="left:1011px;top:759px;width:8px;height:3px;border-radius:2px;background:#9a9a9a"></div>
<!-- tray -->
<svg class="a" style="left:1104px;top:739px" width="13" height="9" viewBox="0 0 13 9"><path d="M1 7.5l5.5-5.5 5.5 5.5" fill="none" stroke="#f0f0f0" stroke-width="1.5"/></svg>
<svg class="a" style="left:1136px;top:735px" width="14" height="17" viewBox="0 0 14 17"><rect x="4" y=".8" width="6" height="10" rx="3" fill="none" stroke="#8ad6f2" stroke-width="1.5"/><path d="M1.2 8a5.8 5.8 0 0 0 11.6 0M7 13.8v2.5" fill="none" stroke="#8ad6f2" stroke-width="1.5"/></svg>
<div class="a" style="left:1166px;top:729px;width:30px;text-align:center;font-size:11.5px;color:#fff;line-height:16px">ESP<br>LAA</div>
<svg class="a" style="left:1210px;top:735px" width="18" height="17" viewBox="0 0 18 17"><path d="M10 2H1.5v10H12M4 15.5h7M7 12v3.5" fill="none" stroke="#f0f0f0" stroke-width="1.2"/><rect x="12.5" y=".8" width="4.5" height="6" rx="1" fill="none" stroke="#f0f0f0" stroke-width="1.1"/><path d="M14.7 6.8v9" stroke="#f0f0f0" stroke-width="1.2"/></svg>
<svg class="a" style="left:1235px;top:737px" width="17" height="15" viewBox="0 0 17 15"><path d="M1 5h3l4-3.5v12L4 10H1z" fill="none" stroke="#f0f0f0" stroke-width="1.2" stroke-linejoin="round"/><path d="M10.5 4.5a4 4 0 0 1 0 6M12.8 2.8a6.5 6.5 0 0 1 0 9.4" fill="none" stroke="#8a8a8a" stroke-width="1.1"/></svg>
<div class="a" style="left:1260px;top:729px;width:63px;text-align:right;font-size:12px;color:#fff;line-height:16px">10:11<br><span style="letter-spacing:.2px">23/1/2025</span></div>
<svg class="a" style="left:1330px;top:737px" width="16" height="16" viewBox="0 0 16 16"><path d="M8 1a5 5 0 0 0-5 5v4L1 12.5h14L13 10V6a5 5 0 0 0-5-5z" fill="#8fd8f8"/><path d="M5.8 14a2.2 2.2 0 0 0 4.4 0z" fill="#8fd8f8"/></svg>

</body></html>
